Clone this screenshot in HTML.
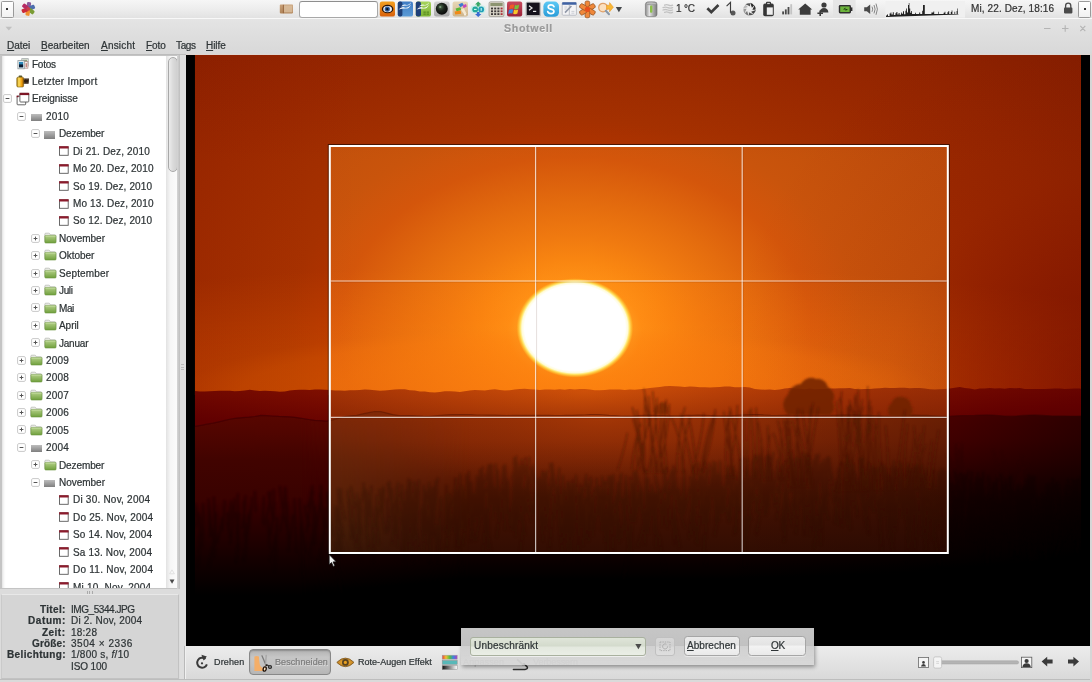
<!DOCTYPE html>
<html><head><meta charset="utf-8"><title>Shotwell</title>
<style>
html,body{margin:0;padding:0}
body{width:1092px;height:682px;overflow:hidden;position:relative;background:#dcdcdc;
 font-family:"Liberation Sans",sans-serif;font-size:10px;color:#2e3436}
.a,.t,svg.i{position:absolute}
.t{white-space:pre;will-change:transform;-webkit-text-stroke:0.22px currentColor}
u{text-decoration:underline;text-underline-offset:1px;text-decoration-thickness:1px}
</style></head><body>

<div class="a" style="left:0;top:0;width:1092px;height:18px;background:linear-gradient(#f6f6f6,#ececec 55%,#e2e2e2)"></div>
<div class="a" style="left:0;top:18px;width:1092px;height:1px;background:#f8f8f8"></div>
<div class="a" style="left:0;top:19px;width:1092px;height:36px;background:linear-gradient(#e4e4e4,#dedede 45%,#d8d8d8)"></div>
<div class="a" style="left:0;top:54px;width:186px;height:1px;background:#bcbcbc"></div>
<div class="a" style="left:186px;top:54px;width:906px;height:1px;background:#dfd6d2"></div>
<div class="a" style="left:1px;top:1px;width:11px;height:15px;border:1px solid #9a9a9a;border-radius:1.5px;background:linear-gradient(#ffffff,#f2f2f2)"></div>
<div class="a" style="left:1078px;top:1px;width:11px;height:15px;border:1px solid #9a9a9a;border-radius:1.5px;background:linear-gradient(#ffffff,#f2f2f2)"></div>
<div class="a" style="left:6px;top:8px;width:2px;height:2px;background:#333"></div>
<div class="a" style="left:1084px;top:8px;width:2px;height:2px;background:#333"></div>
<svg class="i" style="left:0;top:0" width="1092" height="19" viewBox="0 0 1092 19">
<defs>
<linearGradient id="pg1" x1="0" y1="0" x2="0" y2="1"><stop offset="0" stop-color="#f4a020"/><stop offset="1" stop-color="#d8600c"/></linearGradient>
<linearGradient id="pg2" x1="0" y1="0" x2="0" y2="1"><stop offset="0" stop-color="#3f7cc4"/><stop offset="1" stop-color="#5b9bd6"/></linearGradient>
<linearGradient id="pg3" x1="0" y1="0" x2="0" y2="1"><stop offset="0" stop-color="#a6d45c"/><stop offset="1" stop-color="#7cb234"/></linearGradient>
<linearGradient id="pg4" x1="0" y1="0" x2="0" y2="1"><stop offset="0" stop-color="#d4d4d4"/><stop offset="1" stop-color="#a8a8a8"/></linearGradient>
<radialGradient id="pg5" cx="0.4" cy="0.35" r="0.7"><stop offset="0" stop-color="#4c6a4a"/><stop offset="0.45" stop-color="#1c241c"/><stop offset="1" stop-color="#050505"/></radialGradient>
<linearGradient id="pg6" x1="0" y1="0" x2="0" y2="1"><stop offset="0" stop-color="#e8d8b8"/><stop offset="1" stop-color="#cdb48a"/></linearGradient>
<linearGradient id="pg7" x1="0" y1="0" x2="0" y2="1"><stop offset="0" stop-color="#c84a5c"/><stop offset="1" stop-color="#9c2238"/></linearGradient>
<linearGradient id="pg8" x1="0" y1="0" x2="0" y2="1"><stop offset="0" stop-color="#5cc8f4"/><stop offset="1" stop-color="#2a9cd8"/></linearGradient>
<linearGradient id="pg9" x1="0" y1="0" x2="1" y2="0"><stop offset="0" stop-color="#8a8a8a"/><stop offset="0.35" stop-color="#e4e4e4"/><stop offset="0.7" stop-color="#a8a8a8"/><stop offset="1" stop-color="#7c7c7c"/></linearGradient>
<linearGradient id="pg10" x1="0" y1="0" x2="0" y2="1"><stop offset="0" stop-color="#c8a078"/><stop offset="1" stop-color="#b08458"/></linearGradient>
</defs>

<!-- shotwell pinwheel -->
<g transform="translate(28.3 8.9)">
<defs><g id="pw"><rect x="-2.05" y="-6.9" width="4.1" height="6.3" rx="1.1"/></g></defs>
<use href="#pw" fill="#8a5a9a" transform="rotate(8)"/>
<use href="#pw" fill="#4d6eae" transform="rotate(68)"/>
<use href="#pw" fill="#7a9c34" transform="rotate(128)"/>
<use href="#pw" fill="#f0902e" transform="rotate(188)"/>
<use href="#pw" fill="#cc2a3a" transform="rotate(248)"/>
<use href="#pw" fill="#b62a62" transform="rotate(308)"/>
<circle r="1.9" fill="#c8404a"/>
</g>

<!-- brown drawer/ruler icon -->
<rect x="279.8" y="4.6" width="13.2" height="8.8" rx="0.8" fill="url(#pg10)"/>
<rect x="283.8" y="5.4" width="8.6" height="7" fill="#dcc0a0" opacity="0.8"/>
<path d="M283.4 4.8v8.4" stroke="#8e5c34" stroke-width="0.8"/>

<!-- gthumb: orange tile with eye -->
<rect x="379.8" y="1.6" width="15.2" height="15" rx="2.2" fill="url(#pg1)"/>
<ellipse cx="387.6" cy="9" rx="5.8" ry="4.3" fill="#2a1408"/>
<ellipse cx="387.6" cy="9.1" rx="4.4" ry="3.2" fill="#e8eef4"/>
<circle cx="387.3" cy="9.1" r="2.6" fill="#2c5a9a"/>
<circle cx="387.3" cy="9.1" r="1.2" fill="#0a1020"/>

<!-- OOo writer -->
<rect x="397.8" y="1.6" width="15.2" height="15" rx="2.2" fill="url(#pg2)"/>
<rect x="397.8" y="1.6" width="4.6" height="15" rx="2" fill="#1e3f78"/>
<path d="M398.6 9.6q3-3.6 6-2.2t6.4-3q-1.6 4.2-5.2 4.2t-7.2 1zM401 6.4q2.6-2.8 5-1.7t5.2-2.4q-1.300000000000001 3.3-4.2 3.3t-6 0.8z" fill="#fff" opacity="0.9"/>

<!-- OOo calc -->
<rect x="415.8" y="1.6" width="15.2" height="15" rx="2.2" fill="url(#pg3)"/>
<rect x="415.8" y="1.6" width="5.2" height="15" rx="2" fill="#1e3f78"/>
<path d="M416.6 9.6q3-3.6 6-2.2t6.4-3q-1.6 4.2-5.2 4.2t-7.2 1zM419 6.4q2.6-2.8 5-1.7t5.2-2.4q-1.300000000000001 3.3-4.2 3.3t-6 0.8z" fill="#fff" opacity="0.9"/>
<path d="M423.4 11.4h2.4v1.3h-2.4zM426.6 11.4h2.4v1.3h-2.4zM423.4 13.5h2.4v1.3h-2.4zM426.6 13.5h2.4v1.3h-2.4z" fill="#5a8c20"/>

<!-- dark lens -->
<rect x="434" y="1.6" width="15.6" height="15" rx="2.4" fill="url(#pg4)"/>
<circle cx="441.8" cy="8.8" r="6" fill="url(#pg5)"/>
<circle cx="440.2" cy="7" r="1.1" fill="#9ab89a" opacity="0.7"/>

<!-- paint -->
<rect x="452.6" y="1.6" width="15.4" height="15" rx="2" fill="url(#pg6)"/>
<path d="M458.5 4.4l3.8-1.6 1.6 2.4-3.6 2z" fill="#3a7cd0"/>
<path d="M462.6 5.6l3.4-1.6 0.8 2.6-3.2 1.6z" fill="#c848b8"/>
<path d="M455.6 8.6l4.6-1.4 1.4 2.8-5 1.2z" fill="#58b838"/>
<path d="M454.6 11.6l6-1 0.6 3.2-6 0.6z" fill="#f08a18"/>
<path d="M460.8 9.6l3-1.4 2.8 5.6-2.2 1z" fill="#f4e8d0"/>
<path d="M464.6 13.6l2 1.6-2.4 0.4z" fill="#fff"/>

<!-- teal arrows -->
<g>
<rect x="470.6" y="5.6" width="15" height="7.6" rx="3.4" fill="#bfeee8" opacity="0.85"/>
<path d="M478.2 1.4l3.2 3h-1.8v2h-2.8v-2h-1.8z" fill="#38a868"/>
<path d="M478.2 17l-3.2-3h1.8v-2h2.8v2h1.8z" fill="#3a6cd0"/>
<circle cx="475.2" cy="9.4" r="2.9" fill="#24a89c"/>
<circle cx="481.2" cy="9.4" r="2.9" fill="#24a0b8"/>
<path d="M474 9.4h2.6M481.2 8v2.8" stroke="#d8fff8" stroke-width="1"/>
</g>

<!-- calculator -->
<rect x="489" y="1.8" width="15" height="14.8" rx="1.6" fill="#d8d4c8" stroke="#8a867c" stroke-width="0.6"/>
<rect x="490.4" y="3" width="12.2" height="3" fill="#8c9470"/>
<g fill="#3c3838"><rect x="491" y="7.6" width="2" height="1.8"/><rect x="494.2" y="7.6" width="2" height="1.8"/><rect x="497.4" y="7.6" width="2" height="1.8"/>
<rect x="491" y="10.4" width="2" height="1.8"/><rect x="494.2" y="10.4" width="2" height="1.8"/><rect x="497.4" y="10.4" width="2" height="1.8"/>
<rect x="491" y="13.2" width="2" height="1.8"/><rect x="494.2" y="13.2" width="2" height="1.8"/><rect x="497.4" y="13.2" width="2" height="1.8"/></g>
<g fill="#a83038"><rect x="500.6" y="7.6" width="2" height="1.8"/><rect x="500.6" y="10.4" width="2" height="1.8"/><rect x="500.6" y="13.2" width="2" height="1.8"/></g>

<!-- windows flag on red -->
<rect x="507" y="1.6" width="15.2" height="15" rx="2" fill="url(#pg7)"/>
<path d="M510 5.2q2-1.4 4.2-0.4l-0.8 4q-2.2-1-4.2 0.4z" fill="#f05a28"/>
<path d="M515 5q2.2 1 4.2-0.4l-0.8 4q-2 1.4-4.2 0.4z" fill="#7cc038"/>
<path d="M509 10q2-1.4 4.2-0.4l-0.8 4q-2.2-1-4.2 0.4z" fill="#3a8ae0"/>
<path d="M514 9.800000000000001q2.2 1 4.2-0.4l-0.8 4q-2 1.4-4.2 0.4z" fill="#f8c828"/>

<!-- terminal -->
<rect x="525.6" y="1.8" width="15.2" height="14.8" rx="1.6" fill="#b4b4b4"/>
<rect x="526.8" y="2.8" width="12.8" height="12.2" rx="0.6" fill="#15121c"/>
<path d="M529 5.8l3 2.2-3 2.2" fill="none" stroke="#e8e8e8" stroke-width="1.2"/>
<path d="M533 11.400000000000002h3.2" stroke="#e8e8e8" stroke-width="1.2"/>

<!-- skype -->
<rect x="543.4" y="1.6" width="15.6" height="15.2" rx="4.6" fill="url(#pg8)"/>
<path d="M554 6.6q-0.8-1.8-3-1.8q-2.8 0-2.8 2.2q0 1.600000000000001 2.8 2.2t2.900000000000001 2.2q0 2.2-3 2.2q-2.600000000000001 0-3.2-2" fill="none" stroke="#fff" stroke-width="1.7" stroke-linecap="round"/>

<!-- calendar / document -->
<rect x="562.2" y="2.6" width="14.2" height="12.6" rx="0.8" fill="#f4f4f6" stroke="#a8acb4" stroke-width="0.7"/>
<rect x="562.2" y="2.2" width="14.2" height="2.6" rx="0.6" fill="#3e62a4"/>
<path d="M569.3 4.8v10.2" stroke="#b4b8c0" stroke-width="0.9"/>
<path d="M565 12.6l6.4-6.600000000000001" stroke="#9098a8" stroke-width="1.6"/>
<path d="M564.4 7h2.8M564.4 9h2.2M571.4 11.4h3M571.4 13.2h3" stroke="#c0c4cc" stroke-width="0.8"/>

<!-- orange flower -->
<g transform="translate(587.4 9.4)">
<g id="pt"><rect x="-2.3" y="-8.4" width="4.6" height="7.6" rx="1.6" fill="#f0883a" stroke="#9a5a2a" stroke-width="0.8"/></g>
<use href="#pt" transform="rotate(60)"/><use href="#pt" transform="rotate(120)"/><use href="#pt" transform="rotate(180)"/><use href="#pt" transform="rotate(240)"/><use href="#pt" transform="rotate(300)"/>
<circle r="2.6" fill="#e8501c"/>
</g>

<!-- orange magnifier + arrow -->
<circle cx="603" cy="7.6" r="4.3" fill="#fbe0c0" stroke="#e0a068" stroke-width="1.3"/>
<path d="M605.8 10.8l3.2 3.4" stroke="#8a98a8" stroke-width="2" stroke-linecap="round"/>
<path d="M606.6 5.2h3v-2.6l3.8 4.6-3.8 4.6v-2.6h-3z" fill="#f8b838" stroke="#e89018" stroke-width="0.5"/>

<!-- small drop-down triangle -->
<path d="M615.8 7h6.2l-3.1 5.2z" fill="#44484c"/>

<!-- trash can -->
<rect x="645.4" y="2" width="11.6" height="14.6" rx="2.4" fill="url(#pg9)" stroke="#6e6e6e" stroke-width="0.6"/>
<ellipse cx="651.2" cy="3.4" rx="5.2" ry="1.5" fill="#bcbcbc" stroke="#7a7a7a" stroke-width="0.5"/>
<rect x="650" y="5.4" width="2.4" height="7.4" rx="1" fill="#8cc048"/>

<!-- fog -->
<g stroke="#c2c2c2" stroke-width="1.3" fill="none" stroke-linecap="round">
<path d="M664.6 5.2q2-1 4 0t4 0"/><path d="M663 7.6q2.4-1 4.8 0t4.800000000000001 0"/><path d="M663 10q2.4-1 4.8 0t4.800000000000001 0"/><path d="M664.6 12.4q2-1 4 0t4 0"/>
</g>

<!-- check mark -->
<path d="M706.4 9.3l1.9-2 3 3 6.2-6.2 1.9 1.9-8.1 8.1z" fill="#3e3e3e"/>
<!-- hook -->
<path d="M726.6 6.2l3.9-3.8v10.4" fill="none" stroke="#3c3c3c" stroke-width="1.15"/>
<circle cx="733" cy="12.9" r="2.5" fill="#585858"/>
<path d="M730.4 12.8h1" stroke="#3c3c3c" stroke-width="1.1"/>
<!-- spinner -->
<g transform="translate(749.5 9.3)">
<defs><path id="bl" d="M-0.45 -6.48Q2.26 -6.20 3.86 -4.60L2.09 -2.01Q1.35 -3.34 -0.45 -6.48z"/></defs>
<use href="#bl" fill="#2c2c2c" transform="rotate(10)"/>
<use href="#bl" fill="#333" transform="rotate(55)"/>
<use href="#bl" fill="#444" transform="rotate(100)"/>
<use href="#bl" fill="#555" transform="rotate(145)"/>
<use href="#bl" fill="#777" transform="rotate(190)"/>
<use href="#bl" fill="#9a9a9a" transform="rotate(235)"/>
<use href="#bl" fill="#b8b8b8" transform="rotate(280)"/>
<use href="#bl" fill="#555" transform="rotate(325)"/>
</g>
<!-- clipboard -->
<rect x="763.2" y="3.6" width="10.6" height="12.6" rx="1.8" fill="#363636"/>
<rect x="766" y="1.8" width="5" height="3.4" rx="1" fill="#363636"/>
<rect x="767.2" y="2.9" width="2.6" height="1.2" fill="#d0d0d0"/>
<rect x="766.8" y="7.4" width="6" height="7.4" fill="#eeeeee"/>
<!-- signal bars -->
<rect x="782.2" y="11.4" width="1.8" height="3" fill="#4a4a4a"/>
<rect x="784.9" y="9.4" width="1.8" height="5" fill="#4a4a4a"/>
<rect x="787.6" y="7" width="1.8" height="7.4" fill="#4a4a4a"/>
<rect x="790.3" y="4.2" width="1.8" height="10.2" fill="#c4c4c4"/>
<!-- home -->
<path d="M805.2 3.6l7 6h-1.600000000000001v5.2h-10.8v-5.2h-1.6z" fill="#3c3c3c"/>
<!-- person plus -->
<circle cx="824" cy="5" r="2.6" fill="#3c3c3c"/>
<path d="M819.6 12.6q0.4-4.6 4.4-4.6t4.4 4.6z" fill="#3c3c3c"/>
<path d="M820.2 10.4v5.6M817.4 13.2h5.6" stroke="#3c3c3c" stroke-width="1.6"/>
<!-- battery applet (pressed background) -->
<rect x="833" y="0" width="22.6" height="18" fill="#e2e2e2" opacity="0.8"/>
<rect x="838.8" y="5" width="12.2" height="8.4" rx="1.4" fill="#2e2e2e"/>
<rect x="851" y="7.4" width="1.4" height="3.6" fill="#2e2e2e"/>
<rect x="840.2" y="6.4" width="9.4" height="5.6" fill="#6cb43c"/>
<path d="M843 9.6l2.4-2v1.4h2.600000000000001l-2.4 2v-1.4z" fill="#1e3c10"/>
<!-- speaker -->
<path d="M864.2 7.2h2.6l3.4-2.8v9.6l-3.4-2.8h-2.6z" fill="#4a4a4a"/>
<path d="M872 6.6q1.4 2.6 0 5.2M874 5q2.2 4.2 0 8.4M876 3.6q2.8 5.6 0 11.2" fill="none" stroke="#7a7a7a" stroke-width="0.9"/>
<!-- cpu graph -->
<rect x="885.4" y="1" width="79.6" height="16.6" fill="#f0f0f0"/>
<path d="M886 17v-1.400000000000002h1v-1h1v1.4h1.6v-2.4h1v-1h0.8v2h1.400000000000001v-2.4h1v2.8h1.6v-1.8h1v-1.200000000000001h1v2.4h1.2v-1.4h1v1.8h1.4v-2.4h0.8v1.400000000000001h1.2v-2.6h1v3h1.4v-3.4h0.8v-2.2h0.8v3.8h1v-7.4h0.8v-2h0.6v5.4h0.8v4.4h1v-1.8h0.8v3h3v-1.2h0.8v1.200000000000001h3.4v-1.600000000000002h1v1.6h2v-3.2h0.8v-5.8h1.8v9h3v0h3.6v-1.6h2v-1h0.8v2.6h4v-2.2h0.6v2.2h4.8v-1.2h1v-1h0.8v2.2h2v-1.8h1v-1.2h0.8v3h1.6v-2h0.8v-1.4h0.8v3.400000000000002h2v-2.200000000000001h0.8v2.2h1.4v-3h0.6v-2.400000000000001h0.6v5.4h0.6v0.6z" fill="#222"/>
<!-- lock -->
<path d="M1065.6 8v-2.2a2.6 2.6 0 0 1 5.2 0v2.2" fill="none" stroke="#4a4a4a" stroke-width="1.3"/>
<rect x="1064" y="7.6" width="8.4" height="5.8" rx="0.8" fill="#4a4a4a"/>
</svg>

<div class="a" style="left:299px;top:1px;width:77px;height:15px;border:1px solid #a8a8a8;border-top-color:#8e8e8e;border-radius:3px;background:#fff"></div>
<div class="t" style="top:3.23px;font-size:10px;line-height:12px;color:#333;left:676.40px;letter-spacing:-0.217px;">1 °C</div>
<div class="t" style="top:3.04px;font-size:10px;line-height:12px;color:#333;left:971.30px;letter-spacing:0.109px;">Mi, 22. Dez, 18:16</div>
<div class="t" style="top:22.43px;font-size:10.6px;line-height:12px;color:#9a9a9a;left:504.00px;letter-spacing:0.676px;font-weight:bold;text-shadow:0 1px 0 #f4f4f4;">Shotwell</div>
<svg class="i" style="left:5px;top:26px" width="8" height="6" viewBox="0 0 8 6"><path d="M0.5 0.8h6.6L3.8 4.6z" fill="#c0c0c0"/></svg>
<svg class="i" style="left:1040px;top:22px" width="50" height="14" viewBox="1040 22 50 14" fill="none" stroke="#b4b4b4" stroke-width="1.1"><path d="M1044 28.5h6.5M1062 28.5h6.5M1065.2 25.2v6.6M1080.3 25.8l5 5.4M1085.3 25.8l-5 5.4"/></svg>
<div class="t" style="top:39.53px;font-size:10px;line-height:12px;color:#2e3436;left:7.00px;letter-spacing:-0.038px;"><u>D</u>atei</div>
<div class="t" style="top:39.53px;font-size:10px;line-height:12px;color:#2e3436;left:41.20px;letter-spacing:0.028px;"><u>B</u>earbeiten</div>
<div class="t" style="top:39.53px;font-size:10px;line-height:12px;color:#2e3436;left:100.70px;letter-spacing:0.200px;"><u>A</u>nsicht</div>
<div class="t" style="top:39.53px;font-size:10px;line-height:12px;color:#2e3436;left:145.50px;letter-spacing:-0.100px;"><u>F</u>oto</div>
<div class="t" style="top:39.53px;font-size:10px;line-height:12px;color:#2e3436;left:176.00px;letter-spacing:-0.367px;">Tags</div>
<div class="t" style="top:39.53px;font-size:10px;line-height:12px;color:#2e3436;left:206.30px;letter-spacing:-0.075px;"><u>H</u>ilfe</div>
<div class="a" style="left:0;top:55px;width:180px;height:534px;background:#c4c4c4"></div>
<div class="a" style="left:1.5px;top:55.5px;width:164px;height:532.3px;background:#fff;box-shadow:inset 3px 0 3px -2px #dcdcdc"></div>
<div class="a" style="left:165.5px;top:55.5px;width:11.6px;height:532.3px;background:linear-gradient(90deg,#e2e2e2,#f6f6f6 40%,#fbfbfb)"></div>
<div class="a" style="left:167.5px;top:57px;width:8px;height:112.5px;border:0.8px solid #a9a9a9;border-radius:5px;background:linear-gradient(90deg,#ececec,#dadada 50%,#d0d0d0)"></div>
<svg class="i" style="left:168px;top:568px" width="9" height="18" viewBox="168 568 9 18"><path d="M172 569.8l2.4 4h-4.8z" fill="none" stroke="#d8d8d8" stroke-width="0.7"/><path d="M169.6 579.4h4.9l-2.45 4.4z" fill="#4a4a4a"/></svg>
<div class="a" style="left:177.2px;top:55px;width:2.6px;height:534px;background:linear-gradient(90deg,#d6d6d6,#bdbdbd)"></div>
<div class="a" style="left:179.8px;top:55px;width:6.4px;height:627px;background:#dedede"></div>
<div class="a" style="left:180.6px;top:364px;width:3px;height:7px;background:repeating-linear-gradient(#bababa 0 1px,transparent 1px 2.6px)"></div>
<div class="a" style="left:0;top:55.5px;width:165.5px;height:532.3px;overflow:hidden"><div class="a" style="left:0;top:-55.5px;width:200px;height:700px">
<svg class="i" style="left:16.5px;top:57.5px" width="12" height="12" viewBox="0 0 12 12"><rect x="4.8" y="0.7" width="6.4" height="7.4" fill="#e8ece4" stroke="#9aa0a0" stroke-width="0.8"/><rect x="6" y="1.8" width="4" height="4.6" fill="#8aa078"/><rect x="6.9" y="3.6" width="4" height="6.6" fill="#f4f0ee" stroke="#b08a84" stroke-width="0.7"/><path d="M9.2 5.2v4" stroke="#b0483a" stroke-width="0.9"/><rect x="0.9" y="2.6" width="6.3" height="8.2" fill="#eef2f4" stroke="#8e989c" stroke-width="0.8"/><rect x="2" y="3.9" width="4.1" height="5.4" fill="#2a86b8"/><rect x="2" y="6.4" width="4.1" height="2.9" fill="#0a1a30"/></svg>
<div class="t" style="top:58.53px;font-size:10px;line-height:12px;color:#2e3436;left:32.30px;letter-spacing:-0.250px;">Fotos</div>
<svg class="i" style="left:16px;top:74.5px" width="14" height="13" viewBox="0 0 14 13"><defs><linearGradient id="fr" x1="0" y1="0" x2="1" y2="0"><stop offset="0" stop-color="#a87a08"/><stop offset="0.3" stop-color="#ffe060"/><stop offset="0.7" stop-color="#f0a010"/><stop offset="1" stop-color="#9a5c04"/></linearGradient></defs><rect x="2.6" y="0.4" width="3.6" height="2.4" rx="0.8" fill="#5a5a30"/><path d="M7.2 3.4h5.8l-0.4 5.3h-5.4z" fill="#2a1c12"/><path d="M8 4.6h4.6M8 7.9h4.6" stroke="#8a7460" stroke-width="0.7" stroke-dasharray="0.9 0.8"/><rect x="0.8" y="2.2" width="6.8" height="9.8" rx="1.2" fill="url(#fr)" stroke="#7a5a08" stroke-width="0.6"/></svg>
<div class="t" style="top:75.97px;font-size:10px;line-height:12px;color:#2e3436;left:32.30px;letter-spacing:0.269px;">Letzter Import</div>
<svg class="i" style="left:3.30px;top:94.17px" width="9" height="9" viewBox="0 0 9 9"><rect x="0.6" y="0.6" width="7.8" height="7.8" rx="1.3" fill="#fff" stroke="#c9c9c9" stroke-width="1"/><path d="M2.6 4.5h3.8" stroke="#555" stroke-width="1" fill="none"/></svg>
<svg class="i" style="left:16px;top:91.5px" width="14" height="14" viewBox="0 0 14 14"><rect x="1.1" y="4.2" width="8.6" height="8.6" rx="0.8" fill="#fff" stroke="#555" stroke-width="0.9"/><rect x="3.9" y="1.4" width="8.9" height="8.6" rx="0.8" fill="#fff" stroke="#555" stroke-width="0.9"/><rect x="3.5" y="0.8" width="9.7" height="2.3" fill="#7d1525"/><rect x="0.6" y="3.6" width="2" height="1.6" fill="#7d1525"/></svg>
<div class="t" style="top:93.41px;font-size:10px;line-height:12px;color:#2e3436;left:32.30px;letter-spacing:-0.111px;">Ereignisse</div>
<svg class="i" style="left:17.10px;top:111.60px" width="9" height="9" viewBox="0 0 9 9"><rect x="0.6" y="0.6" width="7.8" height="7.8" rx="1.3" fill="#fff" stroke="#c9c9c9" stroke-width="1"/><path d="M2.6 4.5h3.8" stroke="#555" stroke-width="1" fill="none"/></svg>
<div class="a" style="left:30.80px;top:114.00px;width:11px;height:7.2px;background:linear-gradient(#bdbdbd,#7f7f7f)"></div>
<div class="t" style="top:110.84px;font-size:10px;line-height:12px;color:#2e3436;left:46.20px;letter-spacing:0.183px;">2010</div>
<svg class="i" style="left:30.70px;top:129.04px" width="9" height="9" viewBox="0 0 9 9"><rect x="0.6" y="0.6" width="7.8" height="7.8" rx="1.3" fill="#fff" stroke="#c9c9c9" stroke-width="1"/><path d="M2.6 4.5h3.8" stroke="#555" stroke-width="1" fill="none"/></svg>
<div class="a" style="left:44.40px;top:131.44px;width:11px;height:7.2px;background:linear-gradient(#bdbdbd,#7f7f7f)"></div>
<div class="t" style="top:128.28px;font-size:10px;line-height:12px;color:#2e3436;left:59.40px;letter-spacing:-0.107px;">Dezember</div>
<svg class="i" style="left:58.90px;top:146.28px" width="10" height="10" viewBox="0 0 10 10"><rect x="0.5" y="0.9" width="8.7" height="8.4" fill="#fff" stroke="#5a5a5a" stroke-width="0.9"/><rect x="0.1" y="0.2" width="9.5" height="2.3" fill="#8c1b2c"/></svg>
<div class="t" style="top:145.71px;font-size:10px;line-height:12px;color:#2e3436;left:72.90px;letter-spacing:0.147px;">Di 21. Dez, 2010</div>
<svg class="i" style="left:58.90px;top:163.71px" width="10" height="10" viewBox="0 0 10 10"><rect x="0.5" y="0.9" width="8.7" height="8.4" fill="#fff" stroke="#5a5a5a" stroke-width="0.9"/><rect x="0.1" y="0.2" width="9.5" height="2.3" fill="#8c1b2c"/></svg>
<div class="t" style="top:163.14px;font-size:10px;line-height:12px;color:#2e3436;left:72.90px;letter-spacing:0.103px;">Mo 20. Dez, 2010</div>
<svg class="i" style="left:58.90px;top:181.14px" width="10" height="10" viewBox="0 0 10 10"><rect x="0.5" y="0.9" width="8.7" height="8.4" fill="#fff" stroke="#5a5a5a" stroke-width="0.9"/><rect x="0.1" y="0.2" width="9.5" height="2.3" fill="#8c1b2c"/></svg>
<div class="t" style="top:180.58px;font-size:10px;line-height:12px;color:#2e3436;left:72.90px;letter-spacing:0.113px;">So 19. Dez, 2010</div>
<svg class="i" style="left:58.90px;top:198.58px" width="10" height="10" viewBox="0 0 10 10"><rect x="0.5" y="0.9" width="8.7" height="8.4" fill="#fff" stroke="#5a5a5a" stroke-width="0.9"/><rect x="0.1" y="0.2" width="9.5" height="2.3" fill="#8c1b2c"/></svg>
<div class="t" style="top:198.01px;font-size:10px;line-height:12px;color:#2e3436;left:72.90px;letter-spacing:0.103px;">Mo 13. Dez, 2010</div>
<svg class="i" style="left:58.90px;top:216.01px" width="10" height="10" viewBox="0 0 10 10"><rect x="0.5" y="0.9" width="8.7" height="8.4" fill="#fff" stroke="#5a5a5a" stroke-width="0.9"/><rect x="0.1" y="0.2" width="9.5" height="2.3" fill="#8c1b2c"/></svg>
<div class="t" style="top:215.45px;font-size:10px;line-height:12px;color:#2e3436;left:72.90px;letter-spacing:0.113px;">So 12. Dez, 2010</div>
<svg class="i" style="left:30.70px;top:233.65px" width="9" height="9" viewBox="0 0 9 9"><rect x="0.6" y="0.6" width="7.8" height="7.8" rx="1.3" fill="#fff" stroke="#c9c9c9" stroke-width="1"/><path d="M2.6 4.5h3.8M4.5 2.6v3.8" stroke="#555" stroke-width="1" fill="none"/></svg>
<svg class="i" style="left:43.50px;top:231.95px" width="13" height="12" viewBox="0 0 13 12"><defs><linearGradient id="fg10" x1="0" y1="0" x2="0" y2="1"><stop offset="0" stop-color="#b4d088"/><stop offset="1" stop-color="#6f9f3c"/></linearGradient></defs><path d="M0.8 2.2q0-1 1-1h3q0.8 0 1.2 0.9l0.3 0.7h4.6q0.9 0 0.9 0.9v6h-11z" fill="#eeeeec" stroke="#b2b5ae" stroke-width="0.7"/><rect x="0.9" y="3.4" width="11.1" height="7.6" rx="0.8" fill="url(#fg10)" stroke="#6a933d" stroke-width="0.6"/><path d="M1.4 4.1h10.1" stroke="#d2e6b4" stroke-width="0.6"/></svg>
<div class="t" style="top:232.88px;font-size:10px;line-height:12px;color:#2e3436;left:59.40px;letter-spacing:-0.021px;">November</div>
<svg class="i" style="left:30.70px;top:251.08px" width="9" height="9" viewBox="0 0 9 9"><rect x="0.6" y="0.6" width="7.8" height="7.8" rx="1.3" fill="#fff" stroke="#c9c9c9" stroke-width="1"/><path d="M2.6 4.5h3.8M4.5 2.6v3.8" stroke="#555" stroke-width="1" fill="none"/></svg>
<svg class="i" style="left:43.50px;top:249.38px" width="13" height="12" viewBox="0 0 13 12"><defs><linearGradient id="fg11" x1="0" y1="0" x2="0" y2="1"><stop offset="0" stop-color="#b4d088"/><stop offset="1" stop-color="#6f9f3c"/></linearGradient></defs><path d="M0.8 2.2q0-1 1-1h3q0.8 0 1.2 0.9l0.3 0.7h4.6q0.9 0 0.9 0.9v6h-11z" fill="#eeeeec" stroke="#b2b5ae" stroke-width="0.7"/><rect x="0.9" y="3.4" width="11.1" height="7.6" rx="0.8" fill="url(#fg11)" stroke="#6a933d" stroke-width="0.6"/><path d="M1.4 4.1h10.1" stroke="#d2e6b4" stroke-width="0.6"/></svg>
<div class="t" style="top:250.32px;font-size:10px;line-height:12px;color:#2e3436;left:59.40px;letter-spacing:-0.042px;">Oktober</div>
<svg class="i" style="left:30.70px;top:268.52px" width="9" height="9" viewBox="0 0 9 9"><rect x="0.6" y="0.6" width="7.8" height="7.8" rx="1.3" fill="#fff" stroke="#c9c9c9" stroke-width="1"/><path d="M2.6 4.5h3.8M4.5 2.6v3.8" stroke="#555" stroke-width="1" fill="none"/></svg>
<svg class="i" style="left:43.50px;top:266.82px" width="13" height="12" viewBox="0 0 13 12"><defs><linearGradient id="fg12" x1="0" y1="0" x2="0" y2="1"><stop offset="0" stop-color="#b4d088"/><stop offset="1" stop-color="#6f9f3c"/></linearGradient></defs><path d="M0.8 2.2q0-1 1-1h3q0.8 0 1.2 0.9l0.3 0.7h4.6q0.9 0 0.9 0.9v6h-11z" fill="#eeeeec" stroke="#b2b5ae" stroke-width="0.7"/><rect x="0.9" y="3.4" width="11.1" height="7.6" rx="0.8" fill="url(#fg12)" stroke="#6a933d" stroke-width="0.6"/><path d="M1.4 4.1h10.1" stroke="#d2e6b4" stroke-width="0.6"/></svg>
<div class="t" style="top:267.75px;font-size:10px;line-height:12px;color:#2e3436;left:59.40px;letter-spacing:0.137px;">September</div>
<svg class="i" style="left:30.70px;top:285.95px" width="9" height="9" viewBox="0 0 9 9"><rect x="0.6" y="0.6" width="7.8" height="7.8" rx="1.3" fill="#fff" stroke="#c9c9c9" stroke-width="1"/><path d="M2.6 4.5h3.8M4.5 2.6v3.8" stroke="#555" stroke-width="1" fill="none"/></svg>
<svg class="i" style="left:43.50px;top:284.25px" width="13" height="12" viewBox="0 0 13 12"><defs><linearGradient id="fg13" x1="0" y1="0" x2="0" y2="1"><stop offset="0" stop-color="#b4d088"/><stop offset="1" stop-color="#6f9f3c"/></linearGradient></defs><path d="M0.8 2.2q0-1 1-1h3q0.8 0 1.2 0.9l0.3 0.7h4.6q0.9 0 0.9 0.9v6h-11z" fill="#eeeeec" stroke="#b2b5ae" stroke-width="0.7"/><rect x="0.9" y="3.4" width="11.1" height="7.6" rx="0.8" fill="url(#fg13)" stroke="#6a933d" stroke-width="0.6"/><path d="M1.4 4.1h10.1" stroke="#d2e6b4" stroke-width="0.6"/></svg>
<div class="t" style="top:285.19px;font-size:10px;line-height:12px;color:#2e3436;left:59.40px;letter-spacing:-0.367px;">Juli</div>
<svg class="i" style="left:30.70px;top:303.39px" width="9" height="9" viewBox="0 0 9 9"><rect x="0.6" y="0.6" width="7.8" height="7.8" rx="1.3" fill="#fff" stroke="#c9c9c9" stroke-width="1"/><path d="M2.6 4.5h3.8M4.5 2.6v3.8" stroke="#555" stroke-width="1" fill="none"/></svg>
<svg class="i" style="left:43.50px;top:301.69px" width="13" height="12" viewBox="0 0 13 12"><defs><linearGradient id="fg14" x1="0" y1="0" x2="0" y2="1"><stop offset="0" stop-color="#b4d088"/><stop offset="1" stop-color="#6f9f3c"/></linearGradient></defs><path d="M0.8 2.2q0-1 1-1h3q0.8 0 1.2 0.9l0.3 0.7h4.6q0.9 0 0.9 0.9v6h-11z" fill="#eeeeec" stroke="#b2b5ae" stroke-width="0.7"/><rect x="0.9" y="3.4" width="11.1" height="7.6" rx="0.8" fill="url(#fg14)" stroke="#6a933d" stroke-width="0.6"/><path d="M1.4 4.1h10.1" stroke="#d2e6b4" stroke-width="0.6"/></svg>
<div class="t" style="top:302.62px;font-size:10px;line-height:12px;color:#2e3436;left:59.40px;letter-spacing:-0.450px;">Mai</div>
<svg class="i" style="left:30.70px;top:320.82px" width="9" height="9" viewBox="0 0 9 9"><rect x="0.6" y="0.6" width="7.8" height="7.8" rx="1.3" fill="#fff" stroke="#c9c9c9" stroke-width="1"/><path d="M2.6 4.5h3.8M4.5 2.6v3.8" stroke="#555" stroke-width="1" fill="none"/></svg>
<svg class="i" style="left:43.50px;top:319.12px" width="13" height="12" viewBox="0 0 13 12"><defs><linearGradient id="fg15" x1="0" y1="0" x2="0" y2="1"><stop offset="0" stop-color="#b4d088"/><stop offset="1" stop-color="#6f9f3c"/></linearGradient></defs><path d="M0.8 2.2q0-1 1-1h3q0.8 0 1.2 0.9l0.3 0.7h4.6q0.9 0 0.9 0.9v6h-11z" fill="#eeeeec" stroke="#b2b5ae" stroke-width="0.7"/><rect x="0.9" y="3.4" width="11.1" height="7.6" rx="0.8" fill="url(#fg15)" stroke="#6a933d" stroke-width="0.6"/><path d="M1.4 4.1h10.1" stroke="#d2e6b4" stroke-width="0.6"/></svg>
<div class="t" style="top:320.06px;font-size:10px;line-height:12px;color:#2e3436;left:59.40px;letter-spacing:-0.050px;">April</div>
<svg class="i" style="left:30.70px;top:338.26px" width="9" height="9" viewBox="0 0 9 9"><rect x="0.6" y="0.6" width="7.8" height="7.8" rx="1.3" fill="#fff" stroke="#c9c9c9" stroke-width="1"/><path d="M2.6 4.5h3.8M4.5 2.6v3.8" stroke="#555" stroke-width="1" fill="none"/></svg>
<svg class="i" style="left:43.50px;top:336.56px" width="13" height="12" viewBox="0 0 13 12"><defs><linearGradient id="fg16" x1="0" y1="0" x2="0" y2="1"><stop offset="0" stop-color="#b4d088"/><stop offset="1" stop-color="#6f9f3c"/></linearGradient></defs><path d="M0.8 2.2q0-1 1-1h3q0.8 0 1.2 0.9l0.3 0.7h4.6q0.9 0 0.9 0.9v6h-11z" fill="#eeeeec" stroke="#b2b5ae" stroke-width="0.7"/><rect x="0.9" y="3.4" width="11.1" height="7.6" rx="0.8" fill="url(#fg16)" stroke="#6a933d" stroke-width="0.6"/><path d="M1.4 4.1h10.1" stroke="#d2e6b4" stroke-width="0.6"/></svg>
<div class="t" style="top:337.50px;font-size:10px;line-height:12px;color:#2e3436;left:59.40px;letter-spacing:-0.220px;">Januar</div>
<svg class="i" style="left:17.10px;top:355.69px" width="9" height="9" viewBox="0 0 9 9"><rect x="0.6" y="0.6" width="7.8" height="7.8" rx="1.3" fill="#fff" stroke="#c9c9c9" stroke-width="1"/><path d="M2.6 4.5h3.8M4.5 2.6v3.8" stroke="#555" stroke-width="1" fill="none"/></svg>
<svg class="i" style="left:29.90px;top:354.00px" width="13" height="12" viewBox="0 0 13 12"><defs><linearGradient id="fg17" x1="0" y1="0" x2="0" y2="1"><stop offset="0" stop-color="#b4d088"/><stop offset="1" stop-color="#6f9f3c"/></linearGradient></defs><path d="M0.8 2.2q0-1 1-1h3q0.8 0 1.2 0.9l0.3 0.7h4.6q0.9 0 0.9 0.9v6h-11z" fill="#eeeeec" stroke="#b2b5ae" stroke-width="0.7"/><rect x="0.9" y="3.4" width="11.1" height="7.6" rx="0.8" fill="url(#fg17)" stroke="#6a933d" stroke-width="0.6"/><path d="M1.4 4.1h10.1" stroke="#d2e6b4" stroke-width="0.6"/></svg>
<div class="t" style="top:354.93px;font-size:10px;line-height:12px;color:#2e3436;left:46.20px;letter-spacing:0.183px;">2009</div>
<svg class="i" style="left:17.10px;top:373.13px" width="9" height="9" viewBox="0 0 9 9"><rect x="0.6" y="0.6" width="7.8" height="7.8" rx="1.3" fill="#fff" stroke="#c9c9c9" stroke-width="1"/><path d="M2.6 4.5h3.8M4.5 2.6v3.8" stroke="#555" stroke-width="1" fill="none"/></svg>
<svg class="i" style="left:29.90px;top:371.43px" width="13" height="12" viewBox="0 0 13 12"><defs><linearGradient id="fg18" x1="0" y1="0" x2="0" y2="1"><stop offset="0" stop-color="#b4d088"/><stop offset="1" stop-color="#6f9f3c"/></linearGradient></defs><path d="M0.8 2.2q0-1 1-1h3q0.8 0 1.2 0.9l0.3 0.7h4.6q0.9 0 0.9 0.9v6h-11z" fill="#eeeeec" stroke="#b2b5ae" stroke-width="0.7"/><rect x="0.9" y="3.4" width="11.1" height="7.6" rx="0.8" fill="url(#fg18)" stroke="#6a933d" stroke-width="0.6"/><path d="M1.4 4.1h10.1" stroke="#d2e6b4" stroke-width="0.6"/></svg>
<div class="t" style="top:372.37px;font-size:10px;line-height:12px;color:#2e3436;left:46.20px;letter-spacing:0.183px;">2008</div>
<svg class="i" style="left:17.10px;top:390.56px" width="9" height="9" viewBox="0 0 9 9"><rect x="0.6" y="0.6" width="7.8" height="7.8" rx="1.3" fill="#fff" stroke="#c9c9c9" stroke-width="1"/><path d="M2.6 4.5h3.8M4.5 2.6v3.8" stroke="#555" stroke-width="1" fill="none"/></svg>
<svg class="i" style="left:29.90px;top:388.87px" width="13" height="12" viewBox="0 0 13 12"><defs><linearGradient id="fg19" x1="0" y1="0" x2="0" y2="1"><stop offset="0" stop-color="#b4d088"/><stop offset="1" stop-color="#6f9f3c"/></linearGradient></defs><path d="M0.8 2.2q0-1 1-1h3q0.8 0 1.2 0.9l0.3 0.7h4.6q0.9 0 0.9 0.9v6h-11z" fill="#eeeeec" stroke="#b2b5ae" stroke-width="0.7"/><rect x="0.9" y="3.4" width="11.1" height="7.6" rx="0.8" fill="url(#fg19)" stroke="#6a933d" stroke-width="0.6"/><path d="M1.4 4.1h10.1" stroke="#d2e6b4" stroke-width="0.6"/></svg>
<div class="t" style="top:389.80px;font-size:10px;line-height:12px;color:#2e3436;left:46.20px;letter-spacing:0.183px;">2007</div>
<svg class="i" style="left:17.10px;top:408.00px" width="9" height="9" viewBox="0 0 9 9"><rect x="0.6" y="0.6" width="7.8" height="7.8" rx="1.3" fill="#fff" stroke="#c9c9c9" stroke-width="1"/><path d="M2.6 4.5h3.8M4.5 2.6v3.8" stroke="#555" stroke-width="1" fill="none"/></svg>
<svg class="i" style="left:29.90px;top:406.30px" width="13" height="12" viewBox="0 0 13 12"><defs><linearGradient id="fg20" x1="0" y1="0" x2="0" y2="1"><stop offset="0" stop-color="#b4d088"/><stop offset="1" stop-color="#6f9f3c"/></linearGradient></defs><path d="M0.8 2.2q0-1 1-1h3q0.8 0 1.2 0.9l0.3 0.7h4.6q0.9 0 0.9 0.9v6h-11z" fill="#eeeeec" stroke="#b2b5ae" stroke-width="0.7"/><rect x="0.9" y="3.4" width="11.1" height="7.6" rx="0.8" fill="url(#fg20)" stroke="#6a933d" stroke-width="0.6"/><path d="M1.4 4.1h10.1" stroke="#d2e6b4" stroke-width="0.6"/></svg>
<div class="t" style="top:407.24px;font-size:10px;line-height:12px;color:#2e3436;left:46.20px;letter-spacing:0.183px;">2006</div>
<svg class="i" style="left:17.10px;top:425.44px" width="9" height="9" viewBox="0 0 9 9"><rect x="0.6" y="0.6" width="7.8" height="7.8" rx="1.3" fill="#fff" stroke="#c9c9c9" stroke-width="1"/><path d="M2.6 4.5h3.8M4.5 2.6v3.8" stroke="#555" stroke-width="1" fill="none"/></svg>
<svg class="i" style="left:29.90px;top:423.74px" width="13" height="12" viewBox="0 0 13 12"><defs><linearGradient id="fg21" x1="0" y1="0" x2="0" y2="1"><stop offset="0" stop-color="#b4d088"/><stop offset="1" stop-color="#6f9f3c"/></linearGradient></defs><path d="M0.8 2.2q0-1 1-1h3q0.8 0 1.2 0.9l0.3 0.7h4.6q0.9 0 0.9 0.9v6h-11z" fill="#eeeeec" stroke="#b2b5ae" stroke-width="0.7"/><rect x="0.9" y="3.4" width="11.1" height="7.6" rx="0.8" fill="url(#fg21)" stroke="#6a933d" stroke-width="0.6"/><path d="M1.4 4.1h10.1" stroke="#d2e6b4" stroke-width="0.6"/></svg>
<div class="t" style="top:424.67px;font-size:10px;line-height:12px;color:#2e3436;left:46.20px;letter-spacing:0.183px;">2005</div>
<svg class="i" style="left:17.10px;top:442.87px" width="9" height="9" viewBox="0 0 9 9"><rect x="0.6" y="0.6" width="7.8" height="7.8" rx="1.3" fill="#fff" stroke="#c9c9c9" stroke-width="1"/><path d="M2.6 4.5h3.8" stroke="#555" stroke-width="1" fill="none"/></svg>
<div class="a" style="left:30.80px;top:445.27px;width:11px;height:7.2px;background:linear-gradient(#bdbdbd,#7f7f7f)"></div>
<div class="t" style="top:442.11px;font-size:10px;line-height:12px;color:#2e3436;left:46.20px;letter-spacing:0.183px;">2004</div>
<svg class="i" style="left:30.70px;top:460.31px" width="9" height="9" viewBox="0 0 9 9"><rect x="0.6" y="0.6" width="7.8" height="7.8" rx="1.3" fill="#fff" stroke="#c9c9c9" stroke-width="1"/><path d="M2.6 4.5h3.8M4.5 2.6v3.8" stroke="#555" stroke-width="1" fill="none"/></svg>
<svg class="i" style="left:43.50px;top:458.61px" width="13" height="12" viewBox="0 0 13 12"><defs><linearGradient id="fg23" x1="0" y1="0" x2="0" y2="1"><stop offset="0" stop-color="#b4d088"/><stop offset="1" stop-color="#6f9f3c"/></linearGradient></defs><path d="M0.8 2.2q0-1 1-1h3q0.8 0 1.2 0.9l0.3 0.7h4.6q0.9 0 0.9 0.9v6h-11z" fill="#eeeeec" stroke="#b2b5ae" stroke-width="0.7"/><rect x="0.9" y="3.4" width="11.1" height="7.6" rx="0.8" fill="url(#fg23)" stroke="#6a933d" stroke-width="0.6"/><path d="M1.4 4.1h10.1" stroke="#d2e6b4" stroke-width="0.6"/></svg>
<div class="t" style="top:459.54px;font-size:10px;line-height:12px;color:#2e3436;left:59.40px;letter-spacing:-0.107px;">Dezember</div>
<svg class="i" style="left:30.70px;top:477.74px" width="9" height="9" viewBox="0 0 9 9"><rect x="0.6" y="0.6" width="7.8" height="7.8" rx="1.3" fill="#fff" stroke="#c9c9c9" stroke-width="1"/><path d="M2.6 4.5h3.8" stroke="#555" stroke-width="1" fill="none"/></svg>
<div class="a" style="left:44.40px;top:480.14px;width:11px;height:7.2px;background:linear-gradient(#bdbdbd,#7f7f7f)"></div>
<div class="t" style="top:476.97px;font-size:10px;line-height:12px;color:#2e3436;left:59.40px;letter-spacing:-0.021px;">November</div>
<svg class="i" style="left:58.90px;top:494.97px" width="10" height="10" viewBox="0 0 10 10"><rect x="0.5" y="0.9" width="8.7" height="8.4" fill="#fff" stroke="#5a5a5a" stroke-width="0.9"/><rect x="0.1" y="0.2" width="9.5" height="2.3" fill="#8c1b2c"/></svg>
<div class="t" style="top:494.41px;font-size:10px;line-height:12px;color:#2e3436;left:72.90px;letter-spacing:0.217px;">Di 30. Nov, 2004</div>
<svg class="i" style="left:58.90px;top:512.41px" width="10" height="10" viewBox="0 0 10 10"><rect x="0.5" y="0.9" width="8.7" height="8.4" fill="#fff" stroke="#5a5a5a" stroke-width="0.9"/><rect x="0.1" y="0.2" width="9.5" height="2.3" fill="#8c1b2c"/></svg>
<div class="t" style="top:511.84px;font-size:10px;line-height:12px;color:#2e3436;left:72.90px;letter-spacing:0.193px;">Do 25. Nov, 2004</div>
<svg class="i" style="left:58.90px;top:529.84px" width="10" height="10" viewBox="0 0 10 10"><rect x="0.5" y="0.9" width="8.7" height="8.4" fill="#fff" stroke="#5a5a5a" stroke-width="0.9"/><rect x="0.1" y="0.2" width="9.5" height="2.3" fill="#8c1b2c"/></svg>
<div class="t" style="top:529.28px;font-size:10px;line-height:12px;color:#2e3436;left:72.90px;letter-spacing:0.163px;">So 14. Nov, 2004</div>
<svg class="i" style="left:58.90px;top:547.28px" width="10" height="10" viewBox="0 0 10 10"><rect x="0.5" y="0.9" width="8.7" height="8.4" fill="#fff" stroke="#5a5a5a" stroke-width="0.9"/><rect x="0.1" y="0.2" width="9.5" height="2.3" fill="#8c1b2c"/></svg>
<div class="t" style="top:546.71px;font-size:10px;line-height:12px;color:#2e3436;left:72.90px;letter-spacing:0.163px;">Sa 13. Nov, 2004</div>
<svg class="i" style="left:58.90px;top:564.72px" width="10" height="10" viewBox="0 0 10 10"><rect x="0.5" y="0.9" width="8.7" height="8.4" fill="#fff" stroke="#5a5a5a" stroke-width="0.9"/><rect x="0.1" y="0.2" width="9.5" height="2.3" fill="#8c1b2c"/></svg>
<div class="t" style="top:564.15px;font-size:10px;line-height:12px;color:#2e3436;left:72.90px;letter-spacing:0.243px;">Do 11. Nov, 2004</div>
<svg class="i" style="left:58.90px;top:582.15px" width="10" height="10" viewBox="0 0 10 10"><rect x="0.5" y="0.9" width="8.7" height="8.4" fill="#fff" stroke="#5a5a5a" stroke-width="0.9"/><rect x="0.1" y="0.2" width="9.5" height="2.3" fill="#8c1b2c"/></svg>
<div class="t" style="top:581.58px;font-size:10px;line-height:12px;color:#2e3436;left:72.90px;letter-spacing:0.210px;">Mi 10. Nov, 2004</div>
</div></div>
<div class="a" style="left:0;top:589px;width:180px;height:6px;background:#dcdcdc"></div>
<div class="a" style="left:87px;top:590.5px;width:6px;height:3px;background:repeating-linear-gradient(90deg,#aaa 0 1px,transparent 1px 2.4px)"></div>
<div class="a" style="left:0.5px;top:594.3px;width:178px;height:84.5px;background:#d5d5d5;border:1px solid #c2c2c2;border-top-color:#e8e8e8;border-left-color:#cacaca;box-sizing:border-box"></div>
<div class="t" style="top:603.74px;font-size:10px;line-height:12px;color:#2e3436;left:39.90px;letter-spacing:0.320px;font-weight:bold;">Titel:</div>
<div class="t" style="top:603.74px;font-size:10px;line-height:12px;color:#2e3436;left:70.80px;letter-spacing:-0.445px;">IMG_5344.JPG</div>
<div class="t" style="top:615.24px;font-size:10px;line-height:12px;color:#2e3436;left:27.80px;letter-spacing:0.590px;font-weight:bold;">Datum:</div>
<div class="t" style="top:615.24px;font-size:10px;line-height:12px;color:#2e3436;left:70.80px;letter-spacing:0.200px;">Di 2. Nov, 2004</div>
<div class="t" style="top:626.53px;font-size:10px;line-height:12px;color:#2e3436;left:42.20px;letter-spacing:0.475px;font-weight:bold;">Zeit:</div>
<div class="t" style="top:626.53px;font-size:10px;line-height:12px;color:#2e3436;left:70.80px;letter-spacing:0.237px;">18:28</div>
<div class="t" style="top:637.83px;font-size:10px;line-height:12px;color:#2e3436;left:31.60px;letter-spacing:0.160px;font-weight:bold;">Größe:</div>
<div class="t" style="top:637.83px;font-size:10px;line-height:12px;color:#2e3436;left:70.80px;letter-spacing:0.550px;">3504 × 2336</div>
<div class="t" style="top:649.13px;font-size:10px;line-height:12px;color:#2e3436;left:6.60px;letter-spacing:0.360px;font-weight:bold;">Belichtung:</div>
<div class="t" style="top:649.13px;font-size:10px;line-height:12px;color:#2e3436;left:70.80px;letter-spacing:0.246px;">1/800 s, <i>f</i>/10</div>
<div class="t" style="top:660.63px;font-size:10px;line-height:12px;color:#2e3436;left:70.80px;letter-spacing:-0.117px;">ISO 100</div>
<div class="a" style="left:186.2px;top:55px;width:904px;height:590.6px;background:#000;overflow:hidden">
<svg class="i" style="left:0;top:0" width="904" height="590.6" viewBox="186.2 55 904 590.6">
<defs>
<radialGradient id="sky" gradientUnits="userSpaceOnUse" cx="575" cy="332" r="640" gradientTransform="translate(575 332) scale(1 0.74) translate(-575 -332)"><stop offset="0.085" stop-color="#ffa424"/><stop offset="0.105" stop-color="#ff9216"/><stop offset="0.15" stop-color="#f98611"/><stop offset="0.20" stop-color="#f07a10"/><stop offset="0.27" stop-color="#e46c0e"/><stop offset="0.37" stop-color="#d4560b"/><stop offset="0.45" stop-color="#c9540c"/><stop offset="0.54" stop-color="#c4510c"/><stop offset="0.65" stop-color="#bf4d0c"/><stop offset="0.78" stop-color="#b94a0c"/><stop offset="1" stop-color="#ac440c"/></radialGradient>
<linearGradient id="skyv" x1="0" y1="55" x2="0" y2="392" gradientUnits="userSpaceOnUse"><stop offset="0" stop-color="#5a0800" stop-opacity="0.07"/><stop offset="0.32" stop-color="#5a0800" stop-opacity="0"/><stop offset="0.8" stop-color="#b01c00" stop-opacity="0"/><stop offset="1" stop-color="#b01c00" stop-opacity="0.10"/></linearGradient>
<linearGradient id="skyh" x1="195" y1="0" x2="1081" y2="0" gradientUnits="userSpaceOnUse"><stop offset="0" stop-color="#901000" stop-opacity="0.05"/><stop offset="0.2" stop-color="#901000" stop-opacity="0"/><stop offset="1" stop-color="#901000" stop-opacity="0"/></linearGradient>
<radialGradient id="skyr" gradientUnits="userSpaceOnUse" cx="1100" cy="385" r="380"><stop offset="0" stop-color="#640800" stop-opacity="0.32"/><stop offset="0.3" stop-color="#700a00" stop-opacity="0.20"/><stop offset="0.55" stop-color="#800c00" stop-opacity="0.08"/><stop offset="1" stop-color="#800c00" stop-opacity="0"/></radialGradient>
<radialGradient id="hglow" gradientUnits="userSpaceOnUse" cx="560" cy="393" r="760" gradientTransform="translate(560 393) scale(1 0.17) translate(-560 -393)"><stop offset="0" stop-color="#ff800e" stop-opacity="0.70"/><stop offset="0.3" stop-color="#ff800e" stop-opacity="0.58"/><stop offset="0.42" stop-color="#ff800e" stop-opacity="0.48"/><stop offset="0.5" stop-color="#ff800e" stop-opacity="0.30"/><stop offset="0.6" stop-color="#ff7a0c" stop-opacity="0.24"/><stop offset="0.72" stop-color="#ff7a0c" stop-opacity="0.16"/><stop offset="1" stop-color="#ff7a0c" stop-opacity="0"/></radialGradient>
<linearGradient id="lgv" x1="0" y1="414" x2="0" y2="645" gradientUnits="userSpaceOnUse"><stop offset="0" stop-color="#7a2808"/><stop offset="0.07" stop-color="#73270a"/><stop offset="0.20" stop-color="#63250a"/><stop offset="0.37" stop-color="#5b240a"/><stop offset="0.50" stop-color="#49200a"/><stop offset="0.63" stop-color="#361808"/><stop offset="0.80" stop-color="#200c04"/><stop offset="1" stop-color="#100600"/></linearGradient>
<linearGradient id="lgm" x1="195" y1="0" x2="470" y2="0" gradientUnits="userSpaceOnUse"><stop offset="0" stop-color="#fff"/><stop offset="0.38" stop-color="#fff"/><stop offset="1" stop-color="#000"/></linearGradient>
<mask id="lgmask" maskUnits="userSpaceOnUse" x="195" y="400" width="300" height="250"><rect x="195" y="400" width="300" height="250" fill="url(#lgm)"/></mask>
<radialGradient id="sun" gradientUnits="userSpaceOnUse" cx="575.1" cy="327.9" r="58.6" gradientTransform="translate(575.1 327.9) scale(1 0.85) translate(-575.1 -327.9)"><stop offset="0.86" stop-color="#ffffff"/><stop offset="0.905" stop-color="#fffbd8"/><stop offset="0.935" stop-color="#ffe868" stop-opacity="0.95"/><stop offset="0.975" stop-color="#ffc030" stop-opacity="0.55"/><stop offset="1" stop-color="#ffa020" stop-opacity="0"/></radialGradient>
<radialGradient id="hill1" gradientUnits="userSpaceOnUse" cx="585" cy="392" r="520" gradientTransform="translate(585 392) scale(1 0.35) translate(-585 -392)"><stop offset="0" stop-color="#de5a0a"/><stop offset="0.25" stop-color="#c64808"/><stop offset="0.5" stop-color="#aa3606"/><stop offset="0.8" stop-color="#962c06"/><stop offset="1" stop-color="#8c2806"/></radialGradient>
<linearGradient id="hill1v" x1="0" y1="388" x2="0" y2="420" gradientUnits="userSpaceOnUse"><stop offset="0" stop-color="#5a0c00" stop-opacity="0.10"/><stop offset="1" stop-color="#5a0c00" stop-opacity="0.36"/></linearGradient>
<linearGradient id="ground" x1="0" y1="410" x2="0" y2="645" gradientUnits="userSpaceOnUse"><stop offset="0" stop-color="#8e2c05"/><stop offset="0.13" stop-color="#802605"/><stop offset="0.21" stop-color="#702004"/><stop offset="0.30" stop-color="#5a1803"/><stop offset="0.38" stop-color="#4a1402"/><stop offset="0.47" stop-color="#3e1002"/><stop offset="0.60" stop-color="#320d02"/><stop offset="0.75" stop-color="#1e0701"/><stop offset="1" stop-color="#0c0300"/></linearGradient>
<linearGradient id="groundh" x1="195" y1="0" x2="1081" y2="0" gradientUnits="userSpaceOnUse"><stop offset="0" stop-color="#100000" stop-opacity="0.0"/><stop offset="0.22" stop-color="#100000" stop-opacity="0.0"/><stop offset="0.36" stop-color="#100000" stop-opacity="0.0"/><stop offset="0.6" stop-color="#100000" stop-opacity="0.0"/><stop offset="0.8" stop-color="#140000" stop-opacity="0.22"/><stop offset="1" stop-color="#140000" stop-opacity="0.50"/></linearGradient>
<radialGradient id="groundc" gradientUnits="userSpaceOnUse" cx="600" cy="414" r="230" gradientTransform="translate(600 414) scale(1 0.36) translate(-600 -414)"><stop offset="0" stop-color="#c04408" stop-opacity="0.50"/><stop offset="0.5" stop-color="#b03c06" stop-opacity="0.22"/><stop offset="1" stop-color="#a03406" stop-opacity="0"/></radialGradient>
<filter id="dim" x="0" y="0" width="100%" height="100%" color-interpolation-filters="sRGB"><feComponentTransfer><feFuncR type="linear" slope="1" intercept="-0.13"/><feFuncG type="linear" slope="1" intercept="-0.13"/><feFuncB type="linear" slope="1" intercept="-0.13"/></feComponentTransfer></filter>
<filter id="b1" x="-5%" y="-5%" width="110%" height="110%"><feGaussianBlur stdDeviation="0.9"/></filter>
<filter id="b2" x="-5%" y="-5%" width="110%" height="110%"><feGaussianBlur stdDeviation="2.2"/></filter>
<clipPath id="pc"><rect x="195" y="55" width="886.2" height="590.6"/></clipPath>
<clipPath id="cc"><rect x="329" y="145" width="620" height="409"/></clipPath>
</defs>

<g filter="url(#dim)"><g id="ph" clip-path="url(#pc)">
<rect x="195" y="55" width="887" height="340" fill="url(#sky)"/>
<rect x="195" y="55" width="887" height="340" fill="url(#skyv)"/>
<rect x="195" y="55" width="887" height="340" fill="url(#skyh)"/>
<rect x="195" y="250" width="887" height="145" fill="url(#hglow)"/>
<rect x="195" y="55" width="887" height="340" fill="url(#skyr)"/>
<ellipse cx="575.1" cy="327.9" rx="58.6" ry="49.9" fill="url(#sun)"/>
<path d="M195.0 430.0L195.0 391.0L200.0 391.4L205.0 391.4L210.0 391.3L215.0 391.0L220.0 390.7L225.0 390.7L230.0 390.7L235.0 391.3L240.0 390.9L245.0 390.5L250.0 389.8L255.0 390.5L260.0 390.9L265.0 390.8L270.0 391.0L275.0 391.2L280.0 391.8L285.0 391.4L290.0 390.6L295.0 389.9L300.0 389.8L305.0 389.7L310.0 389.9L315.0 389.6L320.0 389.5L325.0 389.8L330.0 389.9L335.0 390.6L340.0 390.6L345.0 390.7L350.0 390.2L355.0 390.2L360.0 389.9L365.0 389.5L370.0 389.7L375.0 390.2L380.0 390.7L385.0 390.5L390.0 390.0L395.0 389.5L400.0 389.3L405.0 389.3L410.0 390.2L415.0 390.6L420.0 391.6L425.0 391.5L430.0 392.3L435.0 392.4L440.0 392.1L445.0 391.3L450.0 391.2L455.0 391.5L460.0 392.0L465.0 391.2L470.0 390.6L475.0 390.1L480.0 390.3L485.0 390.4L490.0 389.7L495.0 389.2L500.0 389.9L505.0 390.5L510.0 390.3L515.0 389.5L520.0 388.9L525.0 388.8L530.0 389.3L535.0 389.4L540.0 389.9L545.0 389.5L550.0 389.5L555.0 389.7L560.0 389.3L565.0 389.8L570.0 389.1L575.0 389.4L580.0 388.9L585.0 389.1L590.0 389.6L595.0 390.2L600.0 390.2L605.0 390.1L610.0 389.5L615.0 389.6L620.0 389.5L625.0 389.9L630.0 389.6L635.0 389.7L640.0 389.3L645.0 388.8L650.0 388.0L655.0 387.5L660.0 386.9L665.0 386.2L670.0 386.0L675.0 386.2L680.0 386.4L685.0 386.9L690.0 386.6L695.0 386.8L700.0 387.2L705.0 387.3L710.0 387.4L715.0 387.3L720.0 386.9L725.0 386.5L730.0 386.5L735.0 387.2L740.0 387.2L745.0 387.1L750.0 387.6L755.0 388.9L760.0 389.5L765.0 389.7L770.0 389.6L775.0 390.0L780.0 389.4L785.0 388.6L790.0 388.1L795.0 388.6L800.0 388.7L805.0 389.3L810.0 388.6L815.0 389.2L820.0 389.1L825.0 389.1L830.0 388.4L835.0 388.5L840.0 388.3L845.0 388.3L850.0 388.1L855.0 388.9L860.0 389.3L865.0 389.0L870.0 389.0L875.0 388.6L880.0 388.3L885.0 387.7L890.0 387.9L895.0 387.9L900.0 387.8L905.0 387.7L910.0 388.2L915.0 388.1L920.0 388.1L925.0 388.4L930.0 389.2L935.0 389.5L940.0 389.3L945.0 388.9L950.0 388.4L955.0 387.7L960.0 387.1L965.0 387.9L970.0 388.5L975.0 389.4L980.0 388.5L985.0 388.4L990.0 388.0L995.0 388.6L1000.0 388.3L1005.0 388.8L1010.0 388.1L1015.0 388.3L1020.0 388.1L1025.0 388.9L1030.0 389.1L1035.0 389.0L1040.0 388.9L1045.0 389.0L1050.0 388.7L1055.0 388.5L1060.0 388.5L1065.0 389.0L1070.0 388.7L1075.0 388.6L1080.0 388.6L1082.0 389.0L1082.0 430.0 Z" fill="url(#hill1)"/>
<path d="M195.0 430.0L195.0 391.0L200.0 391.4L205.0 391.4L210.0 391.3L215.0 391.0L220.0 390.7L225.0 390.7L230.0 390.7L235.0 391.3L240.0 390.9L245.0 390.5L250.0 389.8L255.0 390.5L260.0 390.9L265.0 390.8L270.0 391.0L275.0 391.2L280.0 391.8L285.0 391.4L290.0 390.6L295.0 389.9L300.0 389.8L305.0 389.7L310.0 389.9L315.0 389.6L320.0 389.5L325.0 389.8L330.0 389.9L335.0 390.6L340.0 390.6L345.0 390.7L350.0 390.2L355.0 390.2L360.0 389.9L365.0 389.5L370.0 389.7L375.0 390.2L380.0 390.7L385.0 390.5L390.0 390.0L395.0 389.5L400.0 389.3L405.0 389.3L410.0 390.2L415.0 390.6L420.0 391.6L425.0 391.5L430.0 392.3L435.0 392.4L440.0 392.1L445.0 391.3L450.0 391.2L455.0 391.5L460.0 392.0L465.0 391.2L470.0 390.6L475.0 390.1L480.0 390.3L485.0 390.4L490.0 389.7L495.0 389.2L500.0 389.9L505.0 390.5L510.0 390.3L515.0 389.5L520.0 388.9L525.0 388.8L530.0 389.3L535.0 389.4L540.0 389.9L545.0 389.5L550.0 389.5L555.0 389.7L560.0 389.3L565.0 389.8L570.0 389.1L575.0 389.4L580.0 388.9L585.0 389.1L590.0 389.6L595.0 390.2L600.0 390.2L605.0 390.1L610.0 389.5L615.0 389.6L620.0 389.5L625.0 389.9L630.0 389.6L635.0 389.7L640.0 389.3L645.0 388.8L650.0 388.0L655.0 387.5L660.0 386.9L665.0 386.2L670.0 386.0L675.0 386.2L680.0 386.4L685.0 386.9L690.0 386.6L695.0 386.8L700.0 387.2L705.0 387.3L710.0 387.4L715.0 387.3L720.0 386.9L725.0 386.5L730.0 386.5L735.0 387.2L740.0 387.2L745.0 387.1L750.0 387.6L755.0 388.9L760.0 389.5L765.0 389.7L770.0 389.6L775.0 390.0L780.0 389.4L785.0 388.6L790.0 388.1L795.0 388.6L800.0 388.7L805.0 389.3L810.0 388.6L815.0 389.2L820.0 389.1L825.0 389.1L830.0 388.4L835.0 388.5L840.0 388.3L845.0 388.3L850.0 388.1L855.0 388.9L860.0 389.3L865.0 389.0L870.0 389.0L875.0 388.6L880.0 388.3L885.0 387.7L890.0 387.9L895.0 387.9L900.0 387.8L905.0 387.7L910.0 388.2L915.0 388.1L920.0 388.1L925.0 388.4L930.0 389.2L935.0 389.5L940.0 389.3L945.0 388.9L950.0 388.4L955.0 387.7L960.0 387.1L965.0 387.9L970.0 388.5L975.0 389.4L980.0 388.5L985.0 388.4L990.0 388.0L995.0 388.6L1000.0 388.3L1005.0 388.8L1010.0 388.1L1015.0 388.3L1020.0 388.1L1025.0 388.9L1030.0 389.1L1035.0 389.0L1040.0 388.9L1045.0 389.0L1050.0 388.7L1055.0 388.5L1060.0 388.5L1065.0 389.0L1070.0 388.7L1075.0 388.6L1080.0 388.6L1082.0 389.0L1082.0 430.0 Z" fill="url(#hill1v)"/>
<clipPath id="gc"><path d="M195.0 650.0L195.0 426.3L201.0 425.3L207.0 424.2L213.0 423.2L219.0 421.8L225.0 420.4L231.0 419.0L237.0 418.1L243.0 417.6L249.0 417.2L255.0 416.5L261.0 415.4L267.0 415.7L273.0 416.0L279.0 416.4L285.0 416.6L291.0 416.9L297.0 417.6L303.0 418.5L309.0 419.5L315.0 420.3L321.0 420.7L327.0 421.2L333.0 419.8L339.0 418.2L345.0 416.5L351.0 415.8L357.0 415.4L363.0 413.9L369.0 412.7L375.0 411.5L381.0 411.7L387.0 413.1L393.0 414.6L399.0 415.7L405.0 415.7L411.0 415.6L417.0 415.9L423.0 416.2L429.0 416.3L435.0 415.9L441.0 415.4L447.0 414.9L453.0 414.6L459.0 414.5L465.0 414.6L471.0 414.7L477.0 415.0L483.0 415.0L489.0 415.1L495.0 415.2L501.0 415.4L507.0 415.5L513.0 415.4L519.0 415.4L525.0 415.3L531.0 415.4L537.0 415.3L543.0 415.4L549.0 415.4L555.0 415.5L561.0 415.5L567.0 415.4L573.0 415.4L579.0 415.2L585.0 415.0L591.0 414.6L597.0 414.6L603.0 414.9L609.0 415.4L615.0 415.6L621.0 416.0L627.0 416.1L633.0 416.0L639.0 415.6L645.0 415.4L651.0 415.3L657.0 415.5L663.0 415.5L669.0 415.8L675.0 415.8L681.0 415.8L687.0 415.4L693.0 415.3L699.0 415.1L705.0 415.3L711.0 415.5L717.0 415.8L723.0 415.8L729.0 415.8L735.0 415.5L741.0 415.2L747.0 414.8L753.0 414.6L759.0 414.6L765.0 415.0L771.0 415.4L777.0 415.5L783.0 415.3L789.0 415.2L795.0 415.5L801.0 415.5L807.0 415.4L813.0 415.3L819.0 415.5L825.0 415.6L831.0 415.4L837.0 415.3L843.0 415.0L849.0 415.2L855.0 415.2L861.0 415.3L867.0 415.4L873.0 415.5L879.0 415.8L885.0 416.0L891.0 415.9L897.0 415.6L903.0 415.1L909.0 415.1L915.0 415.1L921.0 415.3L927.0 415.4L933.0 415.8L939.0 416.1L945.0 416.3L951.0 416.2L957.0 415.8L963.0 415.6L969.0 415.5L975.0 415.4L981.0 415.1L987.0 414.9L993.0 415.0L999.0 415.5L1005.0 416.0L1011.0 416.2L1017.0 415.9L1023.0 415.4L1029.0 415.0L1035.0 414.9L1041.0 415.2L1047.0 415.6L1053.0 415.9L1059.0 415.9L1065.0 415.9L1071.0 416.0L1077.0 416.0L1082.0 415.9L1082.0 650.0 Z"/></clipPath>
<path d="M195.0 650.0L195.0 426.3L201.0 425.3L207.0 424.2L213.0 423.2L219.0 421.8L225.0 420.4L231.0 419.0L237.0 418.1L243.0 417.6L249.0 417.2L255.0 416.5L261.0 415.4L267.0 415.7L273.0 416.0L279.0 416.4L285.0 416.6L291.0 416.9L297.0 417.6L303.0 418.5L309.0 419.5L315.0 420.3L321.0 420.7L327.0 421.2L333.0 419.8L339.0 418.2L345.0 416.5L351.0 415.8L357.0 415.4L363.0 413.9L369.0 412.7L375.0 411.5L381.0 411.7L387.0 413.1L393.0 414.6L399.0 415.7L405.0 415.7L411.0 415.6L417.0 415.9L423.0 416.2L429.0 416.3L435.0 415.9L441.0 415.4L447.0 414.9L453.0 414.6L459.0 414.5L465.0 414.6L471.0 414.7L477.0 415.0L483.0 415.0L489.0 415.1L495.0 415.2L501.0 415.4L507.0 415.5L513.0 415.4L519.0 415.4L525.0 415.3L531.0 415.4L537.0 415.3L543.0 415.4L549.0 415.4L555.0 415.5L561.0 415.5L567.0 415.4L573.0 415.4L579.0 415.2L585.0 415.0L591.0 414.6L597.0 414.6L603.0 414.9L609.0 415.4L615.0 415.6L621.0 416.0L627.0 416.1L633.0 416.0L639.0 415.6L645.0 415.4L651.0 415.3L657.0 415.5L663.0 415.5L669.0 415.8L675.0 415.8L681.0 415.8L687.0 415.4L693.0 415.3L699.0 415.1L705.0 415.3L711.0 415.5L717.0 415.8L723.0 415.8L729.0 415.8L735.0 415.5L741.0 415.2L747.0 414.8L753.0 414.6L759.0 414.6L765.0 415.0L771.0 415.4L777.0 415.5L783.0 415.3L789.0 415.2L795.0 415.5L801.0 415.5L807.0 415.4L813.0 415.3L819.0 415.5L825.0 415.6L831.0 415.4L837.0 415.3L843.0 415.0L849.0 415.2L855.0 415.2L861.0 415.3L867.0 415.4L873.0 415.5L879.0 415.8L885.0 416.0L891.0 415.9L897.0 415.6L903.0 415.1L909.0 415.1L915.0 415.1L921.0 415.3L927.0 415.4L933.0 415.8L939.0 416.1L945.0 416.3L951.0 416.2L957.0 415.8L963.0 415.6L969.0 415.5L975.0 415.4L981.0 415.1L987.0 414.9L993.0 415.0L999.0 415.5L1005.0 416.0L1011.0 416.2L1017.0 415.9L1023.0 415.4L1029.0 415.0L1035.0 414.9L1041.0 415.2L1047.0 415.6L1053.0 415.9L1059.0 415.9L1065.0 415.9L1071.0 416.0L1077.0 416.0L1082.0 415.9L1082.0 650.0 Z" fill="url(#ground)"/>
<g clip-path="url(#gc)"><rect x="195" y="400" width="887" height="250" fill="url(#groundc)"/><rect x="195" y="400" width="887" height="250" fill="url(#groundh)"/><rect x="195" y="400" width="300" height="250" fill="url(#lgv)" mask="url(#lgmask)"/></g>
<path d="M195.0 426.3L201.0 425.3L207.0 424.2L213.0 423.2L219.0 421.8L225.0 420.4L231.0 419.0L237.0 418.1L243.0 417.6L249.0 417.2L255.0 416.5L261.0 415.4L267.0 415.7L273.0 416.0L279.0 416.4L285.0 416.6L291.0 416.9L297.0 417.6L303.0 418.5L309.0 419.5L315.0 420.3L321.0 420.7L327.0 421.2L333.0 419.8L339.0 418.2L345.0 416.5L351.0 415.8L357.0 415.4L363.0 413.9L369.0 412.7L375.0 411.5L381.0 411.7L387.0 413.1L393.0 414.6L399.0 415.7L405.0 415.7L411.0 415.6L417.0 415.9L423.0 416.2L429.0 416.3L435.0 415.9L441.0 415.4L447.0 414.9L453.0 414.6L459.0 414.5L465.0 414.6L471.0 414.7L477.0 415.0L483.0 415.0L489.0 415.1L495.0 415.2L501.0 415.4L507.0 415.5L513.0 415.4L519.0 415.4L525.0 415.3L531.0 415.4L537.0 415.3L543.0 415.4L549.0 415.4L555.0 415.5L561.0 415.5L567.0 415.4L573.0 415.4L579.0 415.2L585.0 415.0L591.0 414.6L597.0 414.6L603.0 414.9L609.0 415.4L615.0 415.6L621.0 416.0L627.0 416.1L633.0 416.0L639.0 415.6L645.0 415.4L651.0 415.3L657.0 415.5L663.0 415.5L669.0 415.8L675.0 415.8L681.0 415.8L687.0 415.4L693.0 415.3L699.0 415.1L705.0 415.3L711.0 415.5L717.0 415.8L723.0 415.8L729.0 415.8L735.0 415.5L741.0 415.2L747.0 414.8L753.0 414.6L759.0 414.6L765.0 415.0L771.0 415.4L777.0 415.5L783.0 415.3L789.0 415.2L795.0 415.5L801.0 415.5L807.0 415.4L813.0 415.3L819.0 415.5L825.0 415.6L831.0 415.4L837.0 415.3L843.0 415.0L849.0 415.2L855.0 415.2L861.0 415.3L867.0 415.4L873.0 415.5L879.0 415.8L885.0 416.0L891.0 415.9L897.0 415.6L903.0 415.1L909.0 415.1L915.0 415.1L921.0 415.3L927.0 415.4L933.0 415.8L939.0 416.1L945.0 416.3L951.0 416.2L957.0 415.8L963.0 415.6L969.0 415.5L975.0 415.4L981.0 415.1L987.0 414.9L993.0 415.0L999.0 415.5L1005.0 416.0L1011.0 416.2L1017.0 415.9L1023.0 415.4L1029.0 415.0L1035.0 414.9L1041.0 415.2L1047.0 415.6L1053.0 415.9L1059.0 415.9L1065.0 415.9L1071.0 416.0L1077.0 416.0L1082.0 415.9" fill="none" stroke="#5a1602" stroke-opacity="0.55" stroke-width="1.2"/>
<g filter="url(#b1)" fill="#702404" opacity="0.85">
<path d="M788 415c-6-6-6-15 0-20c1-7 8-11 13-11c3-5 10-8 15-5c6-1 11 3 12 8c6 3 8 10 5 15c3 5 1 10-3 13z"/>
<path d="M890 416c-3-5-2-10 2-13c1-5 6-7 10-6c5 0 9 4 9 8c3 4 2 9-1 11z"/>
<path d="M655 414c-2-4 0-8 3-9c2-3 6-3 8 0c3 1 4 5 2 9z" opacity="0.6"/>
</g>
<path d="M643.6 473.0Q645.3 430.5 644.9 396.1M656.0 473.0Q653.3 430.5 643.9 388.3M644.3 473.0Q640.3 430.5 636.9 409.9M662.8 473.0Q658.9 430.5 662.1 402.1M656.3 473.0Q663.9 430.5 666.6 399.5M657.5 473.0Q652.3 430.5 645.3 404.7M645.6 473.0Q638.8 430.5 632.5 407.0M659.0 473.0Q668.5 430.5 669.6 403.7M648.6 473.0Q657.2 430.5 657.1 397.8M664.1 473.0Q655.7 430.5 652.9 391.0M666.9 473.0Q664.0 430.5 665.1 401.8M652.2 473.0Q651.5 430.5 649.0 395.7M692.7 473.0Q702.6 435.5 704.0 413.0M701.4 473.0Q704.9 435.5 715.2 412.8M701.5 473.0Q708.7 435.5 714.6 417.9M696.8 473.0Q693.5 435.5 688.8 416.3M683.1 473.0Q681.9 435.5 670.9 416.8M676.8 473.0Q677.5 435.5 685.2 407.0M683.4 473.0Q682.6 435.5 690.9 417.2M693.7 473.0Q685.6 435.5 680.9 413.8M702.2 473.0Q713.9 435.5 715.6 409.1M735.9 478.0Q725.3 438.0 724.1 411.2M732.3 478.0Q727.6 438.0 729.7 411.4M727.4 478.0Q737.1 438.0 737.7 404.9M754.7 478.0Q753.2 438.0 751.3 408.1M746.6 478.0Q749.1 438.0 749.3 410.3M756.1 478.0Q758.4 438.0 756.3 407.5M733.6 478.0Q731.0 438.0 728.0 419.5M743.5 478.0Q737.5 438.0 729.9 407.1M726.6 478.0Q723.9 438.0 729.9 411.9M746.1 478.0Q744.1 438.0 745.1 412.9M806.6 487.0Q805.6 444.5 813.3 402.5M805.6 487.0Q811.7 444.5 818.6 407.5M803.0 487.0Q798.6 444.5 797.9 410.0M795.8 487.0Q795.9 444.5 798.5 408.6M808.7 487.0Q804.4 444.5 795.5 414.5M793.9 487.0Q787.4 444.5 786.2 419.7M790.0 487.0Q785.1 444.5 788.2 417.4M794.3 487.0Q791.4 444.5 789.6 420.3M811.4 487.0Q808.2 444.5 802.1 409.4M812.3 487.0Q807.8 444.5 810.9 407.0M800.9 487.0Q800.0 444.5 792.3 419.7M789.9 487.0Q788.2 444.5 783.7 419.8M862.8 491.0Q858.6 438.5 858.5 388.9M862.4 491.0Q858.4 438.5 856.0 393.6M850.4 491.0Q845.7 438.5 847.9 406.3M837.1 491.0Q848.2 438.5 849.6 405.4M850.9 491.0Q854.4 438.5 863.5 406.4M860.9 491.0Q865.8 438.5 870.3 400.6M846.2 491.0Q839.7 438.5 841.8 391.0M855.8 491.0Q848.3 438.5 849.9 403.8M865.9 491.0Q872.6 438.5 871.3 406.3M865.8 491.0Q869.3 438.5 867.9 386.3M842.5 491.0Q839.9 438.5 836.9 400.6M850.2 491.0Q854.8 438.5 862.5 399.5M845.1 491.0Q853.0 438.5 855.2 396.5M848.3 491.0Q847.2 438.5 839.8 397.8M842.5 491.0Q849.6 438.5 850.6 406.3M863.4 491.0Q860.1 438.5 849.6 399.8M865.6 490.0Q862.7 449.0 859.2 413.9M877.5 490.0Q872.2 449.0 876.8 425.1M865.8 490.0Q856.2 449.0 855.3 410.7M895.2 490.0Q900.2 449.0 905.1 409.9M874.1 490.0Q873.0 449.0 868.9 415.7M882.8 490.0Q879.1 449.0 878.9 412.2M868.0 490.0Q867.5 449.0 869.5 423.8M866.6 490.0Q863.1 449.0 857.6 416.2M889.0 490.0Q888.6 449.0 885.7 425.6M877.8 490.0Q878.1 449.0 874.2 418.9M915.5 488.0Q915.6 456.0 920.9 434.1M919.1 488.0Q921.1 456.0 924.6 425.6M915.6 488.0Q919.7 456.0 926.3 444.6M930.7 488.0Q934.4 456.0 938.9 429.8M905.9 488.0Q914.2 456.0 914.7 438.6M927.4 488.0Q930.3 456.0 932.1 440.1M905.3 488.0Q903.0 456.0 907.8 424.1M926.8 488.0Q916.4 456.0 914.0 426.0M642.2 470.0Q641.1 444.0 633.2 418.5M617.9 470.0Q626.1 444.0 627.5 432.8M644.5 470.0Q640.9 444.0 646.7 435.6M638.6 470.0Q634.8 444.0 638.9 433.7M638.0 470.0Q642.3 444.0 650.1 419.3M632.0 470.0Q633.4 444.0 641.2 423.3M767.0 480.0Q767.6 449.0 770.2 434.6M770.8 480.0Q768.5 449.0 767.9 425.7M761.7 480.0Q760.8 449.0 761.7 439.4M782.9 480.0Q780.7 449.0 773.4 433.2M780.6 480.0Q782.2 449.0 781.0 428.6M787.7 480.0Q785.3 449.0 777.9 420.1M788.3 480.0Q790.8 449.0 788.8 427.7M765.0 480.0Q762.6 449.0 758.4 422.4M954.1 490.0Q954.9 465.0 946.6 455.2M953.5 490.0Q959.9 465.0 959.2 449.1M962.7 490.0Q954.7 465.0 956.2 444.8M959.3 490.0Q956.3 465.0 956.1 443.8M954.3 490.0Q963.1 465.0 962.0 443.2M959.3 490.0Q964.1 465.0 962.1 450.3M1020.3 490.0Q1023.3 468.0 1021.9 456.6M1021.4 490.0Q1024.6 468.0 1018.6 462.1M1009.0 490.0Q1007.3 468.0 1001.4 451.2M1015.6 490.0Q1019.5 468.0 1028.5 464.8M1000.1 490.0Q998.7 468.0 993.3 450.1" fill="none" stroke="#4a1403" stroke-width="1.25" opacity="0.62" filter="url(#b1)"/>
<path d="M658.0 486.9q0.7 14.4 3.7 28.7M819.6 504.9q-1.1 21.2 -5.5 42.5M639.9 493.9q1.0 14.9 4.8 29.7M1033.4 540.2q0.9 10.2 4.4 20.3M971.4 516.8q0.6 11.8 2.9 23.6M690.7 477.2q1.1 19.0 5.4 38.0M761.6 457.8q-1.2 14.7 -5.9 29.4M1028.6 548.1q0.9 11.6 4.4 23.2M916.5 475.7q-1.4 26.0 -6.8 52.0M525.1 490.2q1.3 15.6 6.4 31.1M527.5 467.4q1.0 23.3 5.1 46.7M406.9 529.7q-0.4 18.7 -2.0 37.5M432.0 496.8q-0.9 23.5 -4.3 47.1M730.7 483.3q0.4 11.4 2.2 22.8M1008.0 483.7q-0.5 14.9 -2.4 29.8M1001.3 489.2q0.7 9.2 3.5 18.4M503.7 466.5q-0.6 17.6 -3.2 35.3M756.6 456.6q1.4 10.4 6.8 20.8M1002.2 492.6q0.2 9.4 0.9 18.8M803.5 481.3q0.3 26.8 1.3 53.5M542.3 479.9q-0.7 12.6 -3.5 25.2M328.8 496.6q0.9 18.9 4.3 37.9M1011.2 484.1q-1.3 24.0 -6.3 48.0M1016.3 506.3q0.4 24.5 2.2 49.0M553.1 484.2q-1.2 10.4 -5.8 20.8M759.6 455.2q-0.9 13.9 -4.7 27.8M456.9 501.9q-0.0 22.4 -0.2 44.8M543.4 487.7q-0.2 18.5 -0.8 37.1M1053.1 478.9q-0.8 22.9 -3.8 45.8M477.3 476.7q0.7 9.5 3.4 19.0M698.7 480.9q1.1 16.8 5.5 33.6M486.6 509.6q0.3 19.3 1.6 38.6M521.4 479.2q0.7 27.5 3.6 54.9M464.1 491.3q0.1 18.6 0.3 37.2M365.4 505.2q0.7 22.0 3.7 44.0M593.6 497.1q-0.1 18.9 -0.4 37.8M1071.2 488.4q-0.8 22.9 -4.0 45.8M432.0 499.4q0.6 18.6 2.8 37.2M1075.9 485.6q1.1 10.8 5.7 21.7M937.8 493.7q-0.8 23.0 -3.9 46.1M770.9 457.4q0.8 24.7 4.1 49.5M574.7 495.8q0.1 12.5 0.5 25.0M434.0 487.2q0.1 15.4 0.6 30.9M922.0 486.7q0.7 9.1 3.5 18.3M495.9 464.5q0.9 23.0 4.6 46.0M491.5 480.8q-0.7 19.0 -3.6 37.9M633.6 472.7q0.5 13.6 2.5 27.2M470.4 482.4q-0.4 12.7 -1.9 25.4M455.6 478.8q0.1 17.1 0.4 34.1M539.5 495.3q0.2 11.9 0.8 23.7M340.9 489.6q0.8 14.9 4.2 29.7M976.5 493.2q-0.9 20.4 -4.6 40.8M826.2 458.8q-0.2 23.4 -1.0 46.8M480.3 469.5q-0.6 23.8 -3.0 47.6M410.2 514.5q-0.9 13.6 -4.3 27.3M984.1 490.1q-0.9 16.0 -4.6 32.0M1020.7 493.0q-0.5 23.1 -2.5 46.3M1050.0 485.2q-0.5 22.8 -2.7 45.5M960.9 493.1q-1.1 11.7 -5.5 23.3M920.5 476.8q0.4 25.4 2.2 50.9M881.4 463.0q1.0 12.9 5.1 25.9M939.4 482.6q-0.6 17.1 -3.2 34.1M475.2 496.8q0.2 9.7 1.0 19.3M425.0 500.5q1.1 14.6 5.5 29.2M1029.4 475.7q-0.4 12.8 -1.9 25.7M971.9 486.2q-0.8 26.4 -3.8 52.9M756.8 471.7q0.6 12.7 3.1 25.3M888.7 476.3q-0.0 26.4 -0.2 52.8M586.8 479.2q0.8 25.3 3.8 50.5M397.0 487.6q1.0 18.0 4.9 36.0M809.5 455.8q1.0 26.2 5.0 52.4M632.0 524.5q-0.3 17.8 -1.3 35.5M1062.2 532.1q-1.3 12.4 -6.6 24.8M613.8 478.6q-0.7 12.7 -3.4 25.4M457.9 491.3q-0.7 20.3 -3.4 40.7M471.2 483.4q0.8 19.4 3.9 38.8M669.3 495.7q0.3 14.1 1.6 28.2M993.9 490.0q0.7 26.6 3.7 53.2M867.9 474.9q1.3 18.1 6.7 36.2M327.1 495.1q1.3 20.3 6.4 40.6M231.3 501.3q-0.8 11.7 -4.2 23.3M912.4 469.8q1.1 9.9 5.4 19.7M432.9 487.8q-0.1 10.8 -0.3 21.6M469.0 472.0q-0.6 20.9 -2.8 41.8M488.3 473.7q-0.1 9.1 -0.5 18.1M972.0 472.0q-0.5 18.9 -2.5 37.9M602.3 477.0q0.4 10.7 2.1 21.4M458.4 518.8q0.6 26.2 3.1 52.4M718.4 477.4q-0.5 10.3 -2.5 20.6M1017.9 488.1q-0.2 14.5 -1.1 28.9M270.7 493.1q-1.2 16.1 -6.2 32.1M651.5 500.2q-0.7 13.9 -3.7 27.7M639.9 488.9q-1.0 16.5 -5.2 33.0M847.4 482.1q-0.1 21.2 -0.4 42.3M896.1 491.7q-1.1 12.9 -5.6 25.8M376.8 495.5q0.3 24.0 1.6 48.1M200.1 516.7q-0.3 24.3 -1.6 48.7M1036.2 506.7q-0.5 27.5 -2.5 54.9M720.0 461.4q0.5 24.0 2.3 48.0M348.2 490.3q0.9 20.1 4.6 40.2M701.9 489.5q-1.1 26.1 -5.5 52.2M216.2 513.6q-1.4 26.0 -6.9 52.0M778.0 466.9q0.6 12.7 3.0 25.5M733.0 467.3q-0.5 26.6 -2.4 53.2M617.3 505.1q0.6 13.8 3.2 27.7M591.7 480.5q-1.1 10.7 -5.5 21.3M636.9 476.4q-0.7 22.4 -3.4 44.8M595.0 488.4q-1.4 18.4 -6.9 36.8M908.3 464.0q-0.8 18.5 -4.0 37.0M350.2 499.0q0.3 19.7 1.5 39.3M203.5 504.6q-0.2 21.1 -1.2 42.2M492.3 465.2q0.2 19.0 1.1 38.0M942.6 476.4q-0.6 20.6 -3.0 41.1M709.5 463.3q-1.3 16.1 -6.5 32.2M925.7 472.8q1.2 22.8 5.8 45.5M954.7 487.3q-0.5 26.2 -2.5 52.4M402.2 517.8q0.4 21.0 1.8 42.0M821.3 463.1q0.2 13.0 0.9 26.0M574.1 484.0q0.4 19.1 1.9 38.1M821.0 465.4q0.7 23.6 3.5 47.1M313.1 491.3q-1.1 14.6 -5.6 29.2M516.5 456.7q-0.8 11.1 -4.0 22.2M1052.6 484.5q0.3 18.1 1.4 36.3M476.7 488.6q-0.2 11.5 -0.8 23.0M945.0 497.0q-0.2 23.8 -1.1 47.7M891.9 467.5q1.1 24.0 5.6 48.0M366.5 490.4q0.3 17.7 1.3 35.5M666.9 467.5q-1.0 15.3 -5.0 30.7M479.9 471.1q0.9 26.9 4.7 53.7M428.9 494.9q0.8 17.4 4.2 34.7M245.7 496.5q-0.7 15.7 -3.4 31.4M518.6 484.9q-0.8 14.6 -3.8 29.2M414.4 514.6q-0.3 24.2 -1.5 48.4M1032.8 476.4q0.9 15.4 4.7 30.8M917.1 464.8q1.1 20.2 5.3 40.3M437.2 525.4q0.2 18.4 1.0 36.7M667.8 481.8q-0.4 20.7 -1.9 41.4M817.5 458.6q0.1 22.6 0.7 45.1M274.7 502.8q-0.8 15.8 -4.2 31.6M650.0 492.7q-1.4 12.9 -6.9 25.8M569.3 483.4q1.3 13.9 6.5 27.7M978.5 519.9q0.4 14.2 1.9 28.4M684.4 470.5q0.1 18.8 0.6 37.7M387.9 483.6q1.0 12.1 5.1 24.2M770.3 459.1q1.1 14.7 5.5 29.3M999.9 511.0q-1.4 18.1 -7.0 36.2M1020.1 499.0q0.5 22.2 2.6 44.4M285.1 487.7q0.5 18.1 2.7 36.2M199.2 512.9q-1.3 9.5 -6.6 19.1M483.4 474.3q-0.9 24.1 -4.3 48.2M800.3 459.0q0.7 16.2 3.4 32.3M961.9 473.6q0.1 11.5 0.5 23.0M1018.2 491.5q0.0 11.7 0.2 23.4M987.6 494.2q0.1 14.5 0.7 29.1M1030.5 488.7q-0.5 26.3 -2.4 52.7M374.2 533.5q-0.3 14.0 -1.6 28.1M1027.3 479.8q-0.9 14.5 -4.3 29.0M551.1 477.8q-0.9 23.3 -4.3 46.7M663.4 470.8q1.1 15.6 5.4 31.2M1060.2 498.4q0.4 16.5 1.8 33.0M430.2 495.9q0.1 12.0 0.7 24.0M1047.5 484.8q-0.7 26.5 -3.5 52.9M652.6 507.9q1.3 14.8 6.5 29.6M1034.7 477.4q-0.7 11.7 -3.5 23.3M1027.3 530.8q1.3 15.4 6.4 30.8M707.8 494.0q-0.5 22.6 -2.5 45.1M568.1 504.6q-0.7 15.5 -3.7 31.0M480.8 474.1q0.9 10.0 4.4 20.1M784.6 474.7q0.2 26.0 1.0 51.9M497.9 470.3q0.3 19.7 1.4 39.4M522.3 487.8q-1.3 14.2 -6.5 28.3M580.6 484.9q1.2 26.3 5.8 52.5M482.9 467.4q-1.2 11.5 -5.9 22.9M754.8 455.8q-0.7 23.5 -3.5 47.0M486.1 488.5q-1.3 13.2 -6.7 26.4M770.0 461.0q0.1 15.1 0.6 30.1M222.2 518.6q-1.0 12.2 -5.0 24.5M879.3 467.4q0.0 22.9 0.2 45.9M840.9 462.0q-0.6 15.0 -3.1 30.0M702.5 474.5q0.9 22.9 4.3 45.8M782.5 465.0q-1.0 13.6 -5.1 27.1M572.4 502.0q-0.3 27.4 -1.3 54.8M797.2 457.7q0.4 12.2 2.1 24.3M798.2 482.8q-1.1 14.0 -5.3 28.0M558.8 511.8q1.0 23.7 5.0 47.3M876.4 469.1q-0.3 10.0 -1.6 20.1M855.4 472.5q1.3 13.8 6.6 27.7M426.3 505.2q0.6 18.6 3.0 37.3M645.9 470.3q0.2 23.9 1.1 47.9M1043.7 500.8q0.4 26.4 2.1 52.9M569.9 508.1q-0.7 12.3 -3.6 24.7M635.3 471.7q-0.6 10.0 -3.0 19.9M678.8 489.6q1.1 12.3 5.4 24.5M466.9 509.4q-0.8 17.5 -4.1 35.0M277.3 518.0q-0.5 26.3 -2.6 52.7M516.4 475.9q-1.4 23.3 -7.0 46.7M958.0 493.7q-0.3 27.3 -1.6 54.6M913.2 475.2q-0.8 26.0 -3.9 52.1M531.8 468.2q-1.0 14.9 -4.9 29.8M996.9 520.1q0.5 15.3 2.3 30.5M496.5 488.0q0.3 14.4 1.4 28.8M1021.2 485.0q0.5 20.4 2.5 40.8M1066.6 488.1q1.1 16.2 5.7 32.5M604.0 500.5q0.6 14.1 3.0 28.2M1011.0 476.0q-0.3 11.7 -1.7 23.4M617.6 514.5q0.4 13.6 2.0 27.2M772.0 476.1q-1.3 19.6 -6.3 39.1M567.3 483.1q0.7 26.4 3.7 52.8M547.4 470.8q-0.8 13.3 -4.1 26.5M968.3 501.4q0.4 16.8 2.0 33.5M484.5 493.2q-0.1 12.0 -0.6 24.0M466.6 475.6q1.1 25.5 5.3 51.1M964.6 475.0q-0.9 21.4 -4.6 42.8M540.8 482.8q1.3 23.2 6.4 46.4M326.1 510.7q-1.4 25.2 -6.8 50.5M922.1 465.5q-0.3 24.4 -1.7 48.8M863.5 459.8q-0.8 11.3 -3.8 22.7M1029.6 498.0q0.8 15.6 3.9 31.2M270.0 492.2q0.7 14.4 3.3 28.7M816.7 469.0q-0.8 27.2 -4.2 54.4M565.4 492.2q-1.1 10.9 -5.6 21.7M721.5 477.5q-1.2 11.5 -6.0 23.0M596.9 478.8q0.4 17.9 2.2 35.9M337.2 508.6q0.8 10.5 4.2 21.0M560.0 494.3q-0.1 16.3 -0.5 32.7M1057.6 483.1q0.1 20.1 0.7 40.1M425.3 508.2q1.3 14.7 6.5 29.3M430.3 488.8q1.3 26.5 6.3 53.0M911.6 475.4q-1.4 18.3 -6.9 36.7M608.5 524.5q-0.2 18.9 -1.2 37.9M425.4 490.9q0.8 19.9 4.1 39.9M718.4 474.4q-0.5 17.0 -2.6 34.0M550.3 463.8q1.3 14.3 6.6 28.5M674.6 506.9q1.0 20.0 5.0 40.0M913.0 489.0q-0.6 26.8 -3.2 53.6M787.9 469.4q-1.2 25.5 -6.0 51.0M491.1 464.7q0.3 18.8 1.3 37.7M467.7 489.2q1.4 25.5 6.8 51.1M1058.6 486.0q1.2 22.8 6.0 45.6M630.5 525.4q-1.3 27.0 -6.7 54.0M828.4 457.2q-0.4 24.1 -1.8 48.3M1002.4 484.0q-0.2 27.3 -0.8 54.7M1070.6 485.3q0.7 25.0 3.7 50.1M463.1 486.4q-0.2 16.7 -1.1 33.3M835.2 480.9q0.6 21.6 3.2 43.3M405.6 508.2q-0.4 18.7 -1.9 37.5M568.7 482.1q1.3 24.5 6.5 48.9M862.3 458.0q-1.4 20.5 -6.8 41.0M401.8 485.6q1.1 26.7 5.6 53.4M208.8 499.8q1.3 23.9 6.3 47.7M900.5 469.7q0.2 10.6 1.1 21.2M916.1 498.3q-0.9 10.3 -4.6 20.6M1023.3 488.7q-0.4 16.1 -2.2 32.1M209.0 503.0q0.3 16.7 1.5 33.3M784.6 491.6q-0.4 19.2 -1.8 38.4M740.1 469.3q-0.9 13.1 -4.7 26.2M825.1 496.8q0.6 10.7 3.1 21.5M823.5 466.3q-0.3 22.7 -1.4 45.5M621.1 474.3q-1.1 15.7 -5.6 31.4M747.7 466.7q0.7 14.4 3.6 28.7M802.1 463.2q0.2 11.0 0.9 22.1M606.5 481.9q-1.0 24.4 -4.9 48.8M829.2 457.8q1.0 22.0 5.0 44.0M727.6 478.8q-0.7 15.3 -3.6 30.6M403.0 499.9q0.1 24.8 0.4 49.6M611.5 509.3q0.5 21.4 2.4 42.8M363.8 489.2q0.8 12.8 4.0 25.5M698.3 463.2q1.0 27.1 5.2 54.2M636.0 491.8q-0.8 14.0 -3.9 28.1M662.8 488.8q-0.1 18.4 -0.5 36.9M897.7 478.3q0.9 16.0 4.3 31.9M411.2 481.5q-0.3 17.0 -1.7 34.0M360.9 506.8q-0.3 9.4 -1.4 18.7M712.7 469.3q-1.0 13.6 -5.1 27.2M1079.5 495.2q0.7 27.0 3.4 53.9M468.6 486.6q-1.3 16.0 -6.6 32.0M1073.0 480.2q1.1 11.8 5.4 23.7M908.7 465.6q0.0 26.7 0.1 53.4M812.2 498.5q-0.4 18.1 -2.1 36.1M526.7 483.3q-0.2 14.6 -1.1 29.2M652.0 500.5q-0.9 16.3 -4.5 32.7M703.6 536.6q0.5 14.2 2.3 28.4M626.1 476.2q1.0 22.4 4.8 44.9M268.2 520.3q0.4 14.0 1.9 28.0M358.0 523.9q0.6 18.3 3.2 36.6M539.4 479.0q-1.2 14.5 -6.1 29.0M514.2 458.2q1.2 23.1 6.1 46.1M517.2 461.3q0.9 21.1 4.7 42.1M918.6 474.1q1.1 26.8 5.7 53.5M938.0 481.9q0.7 23.4 3.4 46.8M800.2 481.9q-0.9 25.5 -4.3 51.0M1046.5 495.4q0.4 15.3 1.8 30.6M655.4 474.9q0.9 9.7 4.7 19.3M517.6 481.4q-0.3 27.1 -1.7 54.2M743.9 480.2q0.6 26.0 2.8 52.0M460.4 474.7q-0.3 20.9 -1.3 41.7M866.2 486.9q0.2 10.4 1.0 20.8M1011.6 490.7q0.1 22.7 0.5 45.3M383.2 487.1q-1.0 14.1 -4.8 28.3M325.5 508.7q0.3 9.5 1.5 19.0M822.3 506.0q-0.2 19.0 -1.1 38.1M214.1 497.9q0.4 22.2 2.1 44.3M712.0 477.8q-1.2 21.9 -5.9 43.8M599.5 486.4q-1.3 22.8 -6.5 45.5M985.3 497.1q-0.0 17.0 -0.2 34.0M1078.9 513.7q-0.2 20.2 -1.1 40.4M508.3 481.3q0.0 10.5 0.2 21.0M631.2 483.0q0.6 19.2 2.8 38.5M358.4 499.5q0.6 16.9 3.0 33.8M411.4 488.8q0.1 24.7 0.4 49.3M794.1 464.0q-0.9 13.6 -4.5 27.3M752.9 460.8q-0.2 10.5 -0.8 21.1M1001.0 474.9q1.0 17.3 5.1 34.7M1053.3 487.3q-0.6 27.2 -3.0 54.5M711.7 467.3q0.4 15.5 2.1 31.0M761.7 459.8q0.1 18.1 0.4 36.1M576.0 475.7q1.2 25.9 6.0 51.7M371.7 486.5q-0.9 17.0 -4.7 34.1M692.8 490.3q-0.7 23.6 -3.7 47.1M908.3 536.7q-0.3 12.0 -1.6 24.0M751.7 497.7q-1.4 24.1 -6.8 48.2M610.2 496.3q-1.0 22.6 -5.2 45.2M806.3 454.6q-1.4 19.7 -7.0 39.3M836.7 487.9q1.1 11.3 5.7 22.7M790.7 457.4q0.3 13.6 1.7 27.1M408.8 479.4q-1.3 22.7 -6.4 45.4M474.2 494.0q-0.7 23.4 -3.6 46.8M602.0 497.2q0.9 22.2 4.4 44.3M901.2 485.4q0.5 12.2 2.5 24.3M613.6 475.0q-1.3 18.2 -6.7 36.5M982.3 490.8q-1.2 21.9 -6.0 43.9M611.7 498.2q-0.6 16.0 -2.9 32.0M446.6 485.9q0.5 24.1 2.7 48.1M888.2 513.8q1.0 18.7 5.0 37.4M715.9 462.9q0.4 19.7 2.0 39.4M938.8 472.7q-1.2 24.7 -6.1 49.3M489.8 465.0q0.3 16.2 1.6 32.4M316.0 512.5q-0.1 15.5 -0.4 31.0M912.6 486.0q-0.3 16.6 -1.4 33.2M285.5 488.0q0.5 11.2 2.3 22.5M417.9 487.6q-1.1 21.4 -5.7 42.8M1017.2 485.5q-0.3 26.4 -1.4 52.7M1011.3 506.5q0.1 25.8 0.5 51.5M778.3 460.1q-0.9 16.9 -4.4 33.8M486.9 516.9q0.9 19.2 4.7 38.4M224.9 501.0q-0.4 14.7 -2.2 29.3M335.9 542.0q1.2 26.1 6.2 52.2M419.2 480.8q-0.6 24.4 -3.0 48.8M519.0 470.4q1.0 10.7 4.8 21.4M970.1 480.5q0.6 22.0 3.0 44.0M933.9 482.1q0.4 13.3 1.9 26.6M746.8 471.2q-0.7 14.2 -3.3 28.5M1013.3 491.2q1.3 9.9 6.3 19.8M351.1 487.0q1.1 10.1 5.5 20.3M233.8 503.7q-1.1 12.5 -5.6 25.1M280.3 487.0q1.3 20.5 6.6 41.0M768.5 455.5q-0.9 21.4 -4.6 42.9M750.3 478.2q-0.3 13.4 -1.5 26.8M252.3 498.0q-1.2 22.3 -6.2 44.7M1032.5 513.0q-0.9 12.5 -4.3 25.0M234.9 499.2q-0.9 22.0 -4.4 43.9M411.6 498.9q1.2 18.9 6.0 37.8M815.4 464.2q0.3 18.1 1.5 36.3M514.1 462.5q1.2 16.1 6.2 32.2M930.2 500.9q-0.9 23.6 -4.5 47.2M321.2 485.8q0.7 23.7 3.5 47.4M268.6 493.2q1.0 13.3 5.2 26.6M884.7 481.9q-1.0 25.8 -5.2 51.6M525.7 464.7q1.0 20.9 5.2 41.7M943.7 472.5q-0.8 15.9 -3.9 31.8M848.4 472.4q0.1 23.5 0.3 46.9M431.3 499.5q-0.5 19.2 -2.7 38.3M505.9 473.5q0.3 20.0 1.5 40.0M286.3 505.3q0.6 20.7 3.2 41.5M969.6 480.1q1.4 14.1 6.9 28.2M786.6 485.7q1.1 19.9 5.3 39.8M572.7 485.3q-0.6 21.6 -2.8 43.2M375.9 507.9q-0.1 9.4 -0.4 18.9M968.5 471.7q-1.1 9.9 -5.6 19.7M490.6 466.0q0.1 10.9 0.5 21.9M338.4 488.9q0.9 24.1 4.7 48.2M1027.9 480.9q0.2 19.2 0.9 38.5M421.6 510.9q0.6 20.0 3.0 40.0M859.8 468.3q1.2 14.2 5.9 28.3M1010.1 497.7q0.3 20.6 1.4 41.2M773.4 452.8q-1.0 13.4 -5.0 26.9M813.5 492.1q0.7 22.7 3.4 45.4M630.5 477.3q1.4 14.2 6.9 28.4M1067.4 491.9q-0.6 23.9 -2.9 47.7M566.0 501.2q-0.5 19.8 -2.4 39.6M624.3 499.2q1.0 25.4 5.0 50.9M651.8 485.6q1.0 15.9 5.0 31.8M999.1 503.1q-0.3 26.5 -1.4 53.1M997.2 488.6q0.6 19.6 2.9 39.2M426.7 495.5q-0.2 19.0 -0.8 37.9M914.0 466.3q0.8 12.5 4.0 25.0M450.0 503.1q-0.7 23.6 -3.6 47.3M735.1 477.1q0.3 27.0 1.3 54.0M1037.7 499.7q-0.6 24.7 -2.8 49.4M566.7 500.5q-1.0 15.7 -4.8 31.4M804.6 464.3q0.9 26.7 4.4 53.5M893.5 488.5q-0.9 24.3 -4.3 48.6M867.2 506.3q0.3 13.6 1.7 27.2M636.4 470.7q1.2 11.5 6.0 23.0M430.8 506.8q-0.2 27.4 -1.1 54.7M610.9 476.0q0.3 21.6 1.3 43.2M720.4 496.9q-1.1 19.0 -5.6 38.0M1076.8 480.5q1.2 11.3 6.1 22.6M796.7 471.0q-0.7 23.5 -3.3 46.9M671.7 470.8q-1.3 10.5 -6.7 21.1M817.2 461.7q0.2 14.0 0.8 28.0M762.0 477.3q-1.2 16.8 -6.0 33.7M673.7 466.1q-0.5 14.3 -2.5 28.6M797.4 474.2q-1.1 16.1 -5.4 32.2M674.9 469.4q0.9 21.1 4.3 42.1M590.9 477.3q-0.6 13.8 -3.1 27.7M695.5 480.5q-0.6 27.1 -3.2 54.2M715.0 467.5q0.6 21.6 3.0 43.2M1009.0 490.2q1.1 12.6 5.6 25.3M940.1 472.7q0.5 17.4 2.4 34.7M839.0 468.0q-0.8 16.2 -3.8 32.4M475.7 501.8q-0.9 12.6 -4.5 25.2M294.7 499.7q0.4 26.6 2.2 53.2M488.6 478.0q-0.0 26.5 -0.1 53.0M300.9 522.5q0.3 26.6 1.6 53.2M869.5 462.9q-1.1 15.1 -5.5 30.1M757.8 467.1q1.4 18.5 7.0 37.1M763.4 483.2q-1.4 25.2 -6.8 50.4M644.2 520.7q-1.3 12.7 -6.5 25.4M1055.6 484.0q-0.9 15.9 -4.3 31.8M849.2 476.9q0.3 25.8 1.4 51.7M708.1 469.8q-1.1 27.4 -5.6 54.9M945.3 481.6q-0.5 23.1 -2.5 46.1M969.5 497.4q1.2 17.9 6.2 35.7M319.7 504.2q-0.7 13.1 -3.4 26.3M1078.9 490.0q-1.1 14.8 -5.4 29.6M894.2 461.5q-0.7 17.0 -3.3 34.0M859.7 458.9q1.2 26.8 6.0 53.6M563.0 475.9q0.2 23.2 0.9 46.5M850.3 477.8q0.7 14.9 3.4 29.8M785.7 461.2q-1.2 15.3 -6.0 30.7M922.5 477.0q0.4 20.3 2.0 40.6M851.0 460.4q-0.3 15.8 -1.7 31.6M933.3 517.9q1.3 23.4 6.6 46.8M558.4 477.1q0.1 17.9 0.4 35.9M559.5 468.6q-1.0 25.3 -5.1 50.5M890.8 476.3q-0.6 18.3 -2.8 36.7M746.0 477.3q1.4 11.7 6.9 23.5M618.0 483.2q-0.2 27.4 -0.8 54.8M1029.4 497.0q0.5 14.3 2.4 28.7M655.0 493.4q0.2 26.6 1.1 53.2M553.6 495.5q-0.8 26.9 -4.1 53.8M227.3 513.0q0.6 12.1 3.2 24.2M610.3 485.0q-0.6 18.9 -3.1 37.8M441.1 498.7q-0.4 27.3 -2.0 54.5M909.8 481.0q-1.1 16.0 -5.5 32.1M820.7 464.7q-0.9 16.5 -4.6 33.0M980.8 488.6q0.8 24.4 4.1 48.8M923.5 476.2q0.7 16.8 3.4 33.7M871.6 467.8q-0.2 20.1 -1.0 40.2M589.2 485.7q1.1 21.6 5.4 43.1M400.3 492.3q1.0 10.9 5.2 21.9M952.4 483.0q1.1 12.9 5.3 25.7M850.5 467.0q-1.2 11.9 -5.8 23.8M653.1 489.6q-1.3 14.5 -6.5 28.9M896.2 467.7q0.8 9.0 3.9 18.0M816.0 455.5q-1.1 21.2 -5.7 42.3M802.9 454.0q0.1 27.2 0.3 54.4M978.1 473.1q0.5 15.6 2.4 31.3M501.2 492.2q-0.9 22.0 -4.3 44.1M749.2 481.8q-0.7 12.5 -3.7 25.0M895.8 467.5q-0.9 13.2 -4.3 26.4M910.3 474.9q1.4 12.1 6.9 24.2M503.4 489.4q0.4 20.0 2.1 39.9M722.8 486.4q1.2 17.2 6.2 34.4M287.1 503.2q0.5 22.9 2.4 45.9M610.7 481.0q0.2 9.6 0.8 19.2M763.1 484.5q0.5 15.3 2.4 30.5M248.6 514.7q-0.9 23.0 -4.4 46.1M989.2 509.2q-0.3 27.4 -1.5 54.8M664.0 500.1q0.8 13.8 3.8 27.6M457.0 495.0q-0.8 15.3 -4.1 30.6M729.8 494.4q-0.2 13.7 -1.0 27.5M407.6 489.9q-1.1 11.4 -5.5 22.8M851.3 467.1q1.3 21.7 6.6 43.3M621.0 474.0q-0.3 12.8 -1.3 25.5M885.9 476.0q0.7 25.8 3.4 51.5M585.1 499.0q-0.0 19.1 -0.1 38.3M836.9 493.8q-0.4 14.6 -2.0 29.2M1077.6 488.1q0.4 17.1 1.8 34.3M915.6 467.2q-0.0 10.4 -0.2 20.8M1031.6 499.6q-0.1 20.0 -0.4 40.1M793.8 469.8q0.0 22.6 0.2 45.2M902.4 481.3q-0.0 14.7 -0.0 29.4M524.1 506.2q-0.7 22.7 -3.5 45.4M762.7 470.7q-0.9 13.7 -4.5 27.3M397.5 489.6q-0.9 21.8 -4.5 43.7M196.4 508.3q1.0 14.6 5.2 29.1M429.2 483.6q-0.8 11.4 -3.9 22.8M696.5 480.6q0.2 12.9 1.1 25.9M728.0 467.7q0.6 11.7 2.8 23.3M389.7 482.0q1.3 25.3 6.5 50.6M436.9 488.9q-0.3 9.4 -1.6 18.8M692.1 495.6q1.3 24.1 6.3 48.1M796.3 458.9q-0.1 25.1 -0.3 50.1M1025.3 486.8q0.6 24.0 3.1 48.0M579.6 494.4q1.1 17.5 5.3 35.0M844.7 473.0q0.2 22.3 0.9 44.7M969.9 483.1q-0.5 22.4 -2.4 44.7M414.3 483.5q0.8 10.2 4.0 20.3M803.4 474.8q0.5 23.9 2.5 47.8M813.5 460.6q-0.8 21.0 -3.9 42.1M654.3 499.4q-0.0 16.5 -0.2 32.9M415.8 490.2q-0.8 9.5 -3.9 19.1M817.9 470.7q-1.4 26.2 -7.0 52.3M960.3 473.4q0.5 24.5 2.4 49.0M488.6 465.5q-1.1 11.3 -5.6 22.7M593.2 501.5q-1.0 13.8 -4.9 27.7M767.8 479.0q-0.2 16.9 -0.8 33.8M980.7 478.3q0.3 19.4 1.7 38.7M730.3 474.5q1.4 16.3 6.9 32.6M543.9 480.1q-0.1 24.9 -0.7 49.8M575.3 510.0q-0.3 11.9 -1.5 23.8M910.7 479.8q-0.7 26.1 -3.3 52.3M544.1 472.9q0.6 20.1 3.1 40.2M244.1 501.3q0.4 22.5 2.2 44.9M910.5 501.5q-0.7 18.6 -3.4 37.2M1046.2 512.1q0.2 24.4 0.8 48.8M559.6 486.0q0.1 20.2 0.7 40.5M470.3 484.0q0.1 20.4 0.7 40.8M891.0 487.7q0.5 26.8 2.3 53.7M769.1 455.9q1.4 22.9 7.0 45.9M707.1 475.7q0.2 23.1 1.0 46.1M408.2 522.1q0.5 14.4 2.3 28.9M525.8 457.9q-1.0 15.9 -4.8 31.9M823.3 460.3q1.0 11.3 4.9 22.6M625.8 480.4q-0.2 20.4 -0.8 40.9M1047.4 497.2q-1.4 24.1 -7.0 48.1M816.6 455.3q0.2 20.8 1.2 41.7M748.2 459.5q0.2 22.3 0.8 44.6M516.3 462.5q0.4 12.7 2.0 25.4M335.5 506.7q1.0 20.3 4.9 40.7M788.5 502.4q-1.2 9.8 -6.2 19.7M571.8 494.9q-0.9 25.9 -4.6 51.9M898.9 490.2q-0.7 20.5 -3.7 40.9M527.7 468.6q-1.4 26.5 -7.0 53.0M455.1 496.5q-0.7 15.8 -3.6 31.7M406.1 491.1q-0.1 15.9 -0.3 31.7M726.7 476.9q-0.6 14.3 -2.9 28.5M740.4 480.1q-1.2 26.8 -5.8 53.7M370.8 496.0q0.6 22.2 3.0 44.4M438.0 478.3q-0.9 9.4 -4.6 18.8M723.5 494.2q-0.8 10.9 -4.2 21.7M714.9 477.2q0.1 16.2 0.3 32.3M483.0 490.6q-1.4 24.8 -6.9 49.6M955.0 484.9q-0.6 11.1 -2.9 22.2M505.7 470.6q-0.6 24.2 -3.1 48.4M398.3 483.1q-1.2 14.8 -5.8 29.5M913.1 487.8q0.9 9.0 4.4 18.0M588.0 497.4q0.2 21.6 0.9 43.2M1016.7 491.2q-1.4 24.5 -6.8 49.1M692.0 492.7q0.9 22.0 4.4 44.0M901.3 464.9q0.9 18.1 4.4 36.2M673.2 475.4q-1.3 13.5 -6.6 27.1M673.7 518.4q0.2 12.7 1.2 25.5M812.3 493.5q0.3 18.6 1.6 37.1M705.3 462.3q1.0 22.2 5.2 44.5M952.4 494.2q1.2 22.4 6.2 44.8M808.7 489.0q1.0 15.0 5.2 30.0M736.2 487.1q0.9 12.1 4.5 24.2M293.0 515.5q-1.0 17.3 -4.8 34.7M216.2 513.9q-0.3 21.5 -1.7 43.0M907.0 468.2q-0.3 16.8 -1.5 33.6M955.2 471.3q0.5 10.8 2.5 21.5M305.0 506.1q0.9 9.8 4.7 19.6M869.0 464.7q-0.2 14.4 -0.8 28.7M515.2 465.9q0.1 16.8 0.7 33.5M392.5 489.6q-0.6 20.1 -3.2 40.1M966.8 476.1q-0.4 13.5 -1.8 27.1M969.4 490.0q0.6 15.6 3.1 31.2M965.5 475.6q-0.9 25.6 -4.5 51.2M1068.0 479.8q-0.9 27.2 -4.5 54.5M410.3 497.6q-1.0 25.7 -5.1 51.4M806.0 469.5q-1.1 17.6 -5.4 35.2M347.9 492.0q1.2 23.4 5.9 46.9M491.1 465.9q-0.1 18.9 -0.7 37.7M353.3 494.9q0.6 25.8 2.8 51.7M823.4 494.5q-0.9 17.0 -4.6 33.9M910.7 470.2q0.3 26.8 1.6 53.7M713.4 472.0q0.2 14.1 1.0 28.1M702.1 469.1q1.2 11.6 6.1 23.2M944.5 486.8q0.0 22.7 0.1 45.3M273.7 490.4q0.1 14.1 0.5 28.2M552.5 463.4q1.1 18.2 5.3 36.5M674.2 481.6q-0.2 22.9 -0.8 45.8M948.6 479.7q-0.9 17.7 -4.7 35.4M767.6 457.8q0.3 24.4 1.7 48.7M514.4 485.4q0.0 21.0 0.1 42.0M840.8 479.1q0.2 23.4 1.1 46.9M618.7 486.4q-1.0 10.9 -4.8 21.9M874.9 473.3q-0.2 12.7 -0.8 25.4M660.0 537.6q1.0 16.2 4.9 32.5M238.1 494.7q-0.1 12.5 -0.5 25.0M1066.8 487.2q-0.8 12.0 -3.8 24.0M720.1 470.9q0.6 21.1 3.1 42.2M564.6 489.0q-0.2 16.4 -1.2 32.7M572.9 480.0q-1.1 18.6 -5.3 37.1M860.2 480.0q1.3 23.0 6.5 46.1M542.7 471.2q-1.2 13.0 -6.1 26.0M1071.9 493.8q0.6 23.2 3.0 46.5M791.3 454.0q0.5 20.9 2.7 41.7M943.6 469.8q-1.1 26.9 -5.5 53.8M1020.5 487.6q0.2 16.0 1.2 31.9M791.2 452.3q0.0 19.5 0.1 39.0M976.5 477.9q0.6 15.6 3.0 31.2M397.6 495.5q-1.1 24.1 -5.3 48.2M887.9 474.3q-0.6 20.7 -2.8 41.5M579.2 510.7q-0.2 24.6 -1.0 49.2M255.1 492.0q0.2 9.6 0.9 19.2M886.2 469.3q-1.2 18.9 -5.8 37.9M479.8 477.1q-0.9 18.7 -4.5 37.4M469.7 486.4q0.6 24.2 2.9 48.5M812.6 467.4q1.2 14.8 5.9 29.7M285.1 489.3q-0.9 21.0 -4.6 41.9M482.4 486.1q0.5 15.5 2.4 31.1M678.5 501.0q1.3 13.1 6.7 26.2M956.7 506.6q-0.6 17.2 -2.9 34.5M901.4 482.5q0.6 15.6 3.1 31.2M582.8 488.7q-0.6 16.7 -2.8 33.4M609.4 495.3q1.0 14.9 4.9 29.7M264.1 497.3q-0.3 12.7 -1.3 25.3M625.7 501.6q-0.8 18.1 -3.8 36.1M716.3 478.4q-0.1 22.4 -0.4 44.8M599.1 492.1q0.7 18.7 3.5 37.4M320.1 494.2q0.8 15.6 3.9 31.2M408.6 484.4q-0.6 20.8 -2.9 41.7M909.6 472.8q0.3 16.3 1.6 32.5M1076.4 483.7q-1.2 22.4 -6.0 44.7M936.9 488.5q-0.2 9.1 -1.0 18.3M539.1 485.6q1.0 13.4 5.0 26.8M891.6 477.4q-0.3 22.5 -1.3 44.9M522.0 483.9q-1.3 23.2 -6.3 46.4M493.1 488.8q0.0 14.6 0.1 29.1M1043.4 494.5q-0.9 9.9 -4.6 19.7M972.3 485.6q-1.2 21.8 -5.8 43.7M917.2 465.1q1.2 10.7 6.1 21.4M741.6 471.9q0.5 18.1 2.4 36.1M933.8 470.4q-0.7 23.4 -3.5 46.7M983.5 472.4q-0.3 14.8 -1.6 29.5M657.1 494.7q-0.3 20.2 -1.4 40.4M947.3 502.8q1.2 13.8 5.8 27.6M529.5 457.6q-1.3 22.2 -6.6 44.5M506.7 485.2q0.9 22.2 4.4 44.4M573.7 530.1q-1.3 10.8 -6.3 21.7M926.2 469.6q0.3 12.4 1.3 24.8M863.3 469.3q0.7 14.6 3.3 29.1M446.0 496.1q-0.1 18.1 -0.4 36.2M756.6 470.8q-1.0 13.3 -5.0 26.6M932.2 482.3q0.3 27.2 1.4 54.5M459.3 485.5q1.0 17.5 5.2 35.0M825.8 471.8q0.6 12.0 3.2 23.9M493.8 486.3q1.1 16.6 5.6 33.1M650.0 493.9q-0.3 19.7 -1.5 39.4M520.3 466.2q0.9 23.9 4.5 47.9M603.2 482.8q-1.0 11.5 -5.1 23.0M1024.0 503.3q0.9 17.5 4.3 35.0M584.8 502.5q-0.3 21.0 -1.5 42.1M275.8 535.2q-1.1 12.6 -5.6 25.1M807.6 462.8q1.0 15.9 4.9 31.8M1043.8 498.9q1.1 12.8 5.4 25.6M299.8 499.7q1.3 26.4 6.4 52.9M450.0 507.8q-1.3 10.9 -6.5 21.9M740.7 459.2q-0.7 20.6 -3.7 41.1M915.9 501.9q-0.0 21.4 -0.2 42.9M870.9 486.6q-0.5 9.3 -2.7 18.5M641.6 491.2q0.4 12.8 2.1 25.6M634.4 487.6q-0.3 12.5 -1.6 25.0M327.7 492.1q0.9 20.7 4.6 41.3M505.2 465.1q0.5 12.4 2.7 24.7M1006.3 479.5q-1.3 14.2 -6.3 28.4M532.9 465.3q1.2 11.7 6.2 23.3M846.6 455.4q0.9 10.0 4.7 19.9M766.7 456.8q-0.1 24.1 -0.5 48.3M236.0 513.2q0.6 17.8 2.8 35.7M477.4 482.2q-0.5 15.8 -2.6 31.7M957.1 497.0q-0.4 27.1 -2.0 54.2M423.9 486.1q0.1 25.3 0.5 50.7M779.8 489.5q-0.6 14.5 -3.1 28.9M465.6 502.4q-0.2 9.6 -1.1 19.2M545.6 473.8q0.5 15.3 2.5 30.5M941.2 469.7q1.1 26.3 5.6 52.6M773.4 471.9q-1.1 17.8 -5.7 35.5M787.4 497.6q-0.6 21.6 -3.1 43.2M534.7 494.5q-0.1 9.8 -0.5 19.5M815.0 474.8q-0.7 13.1 -3.7 26.3M975.3 482.8q-0.4 15.7 -2.2 31.3M912.4 504.8q-0.6 16.9 -3.1 33.8M195.7 504.6q-1.1 22.8 -5.5 45.6M397.0 499.5q0.2 23.1 1.0 46.2M480.5 474.7q-0.3 25.8 -1.7 51.6M902.6 473.7q1.0 26.8 5.0 53.7M403.4 509.5q-0.2 20.9 -0.8 41.8M690.2 487.7q-1.4 13.5 -6.8 27.1M250.3 511.0q-1.2 11.2 -5.8 22.5M693.4 466.8q0.1 17.8 0.3 35.7M927.4 489.0q-1.1 22.7 -5.3 45.3M1010.5 513.3q0.7 17.9 3.7 35.7M490.8 466.4q0.7 22.4 3.7 44.8M456.6 478.9q-1.1 14.1 -5.7 28.3M605.2 481.8q1.3 17.3 6.5 34.6M957.3 475.4q0.7 10.5 3.4 20.9M1072.9 490.4q0.9 22.8 4.7 45.5M1079.0 479.9q0.4 18.5 1.8 36.9M925.4 476.7q0.8 10.1 4.0 20.2M608.5 476.8q1.2 20.5 5.8 40.9M874.2 469.7q-0.3 20.8 -1.4 41.5M993.5 484.3q-0.8 18.8 -3.8 37.6M422.5 506.7q0.8 12.9 4.0 25.8M922.3 517.3q0.9 16.4 4.5 32.9M684.0 477.3q-0.2 14.1 -0.9 28.1M712.9 469.6q1.3 25.7 6.7 51.4M612.3 492.7q-1.2 10.7 -6.0 21.3M340.7 521.7q0.2 16.7 0.9 33.4M873.3 466.2q1.3 26.6 6.3 53.2M312.6 486.4q-1.0 10.4 -4.8 20.8M622.1 499.2q0.9 12.2 4.4 24.3M1037.8 498.8q0.8 25.7 4.0 51.5M418.1 486.4q-0.9 27.3 -4.3 54.6M387.6 498.8q0.0 16.9 0.1 33.8M890.0 479.2q-0.9 13.0 -4.4 26.0M802.6 453.3q-0.2 19.9 -1.2 39.8M976.8 493.2q-0.1 21.0 -0.3 42.0M818.9 454.5q-0.8 18.0 -4.1 36.0M384.3 489.2q-0.4 11.9 -2.0 23.9M945.6 472.4q0.5 16.2 2.6 32.5M747.3 485.1q-0.4 20.1 -1.9 40.3M806.5 460.4q0.7 12.7 3.5 25.3M608.8 499.0q1.2 11.8 6.1 23.6M1079.3 478.5q-0.1 22.1 -0.6 44.2M879.3 497.5q0.6 26.8 2.8 53.5M894.6 469.3q0.1 16.9 0.6 33.8M988.5 476.3q0.8 23.2 4.0 46.4M1030.4 484.8q-0.7 10.2 -3.3 20.5M311.0 493.6q-0.8 19.0 -4.0 38.0M939.7 484.0q-0.4 20.8 -2.1 41.6M621.7 473.8q-1.1 20.3 -5.3 40.5M485.4 516.2q-0.5 19.1 -2.6 38.3M1009.3 477.0q0.6 15.6 2.8 31.2M894.5 497.6q0.0 13.7 0.2 27.3M829.8 458.5q0.6 10.3 2.8 20.6M419.2 483.1q-0.8 13.4 -4.2 26.8M720.4 463.2q-0.2 16.2 -1.2 32.4M367.7 492.7q0.3 10.4 1.5 20.9M573.4 490.8q-0.3 21.7 -1.6 43.3M647.0 505.1q-0.5 19.5 -2.3 39.0M994.5 483.1q-1.1 27.5 -5.6 55.0M997.2 479.1q-0.1 25.5 -0.4 51.0M449.8 494.2q0.2 17.7 0.9 35.3M695.6 473.9q-1.0 9.3 -5.1 18.6M907.2 470.6q-0.1 10.5 -0.3 21.1M523.7 465.5q-0.6 13.6 -2.8 27.2M414.3 500.8q0.8 20.4 3.9 40.8M700.5 475.5q0.6 23.5 3.1 46.9M991.8 500.3q0.4 12.0 1.9 24.0M808.2 459.9q1.3 11.3 6.4 22.7M543.7 481.2q-0.2 10.3 -0.8 20.7M433.8 501.3q-0.3 17.2 -1.3 34.4M363.8 483.6q1.2 15.8 6.0 31.7M713.6 461.9q-0.9 25.2 -4.7 50.4M602.5 494.1q0.2 12.0 1.1 24.1M884.3 465.6q0.8 25.9 4.2 51.7M521.9 459.5q-0.5 17.4 -2.4 34.8M313.5 501.1q0.1 21.9 0.3 43.9M930.1 491.1q-0.9 25.7 -4.6 51.4M459.0 489.7q0.8 11.8 4.2 23.7M752.8 470.2q1.0 21.7 4.8 43.4M357.4 494.4q0.4 22.9 2.1 45.8M803.2 463.8q-1.0 12.4 -5.0 24.8M1074.4 480.5q-0.7 22.7 -3.5 45.4M1031.5 478.7q0.5 9.6 2.6 19.2M533.4 472.8q0.0 10.0 0.2 19.9M415.4 482.3q-0.8 17.1 -3.9 34.2M745.3 515.9q0.0 25.1 0.0 50.1M884.6 480.1q1.4 15.5 7.0 31.1M917.8 504.8q-0.7 24.1 -3.4 48.1M981.6 507.8q-0.1 22.9 -0.4 45.9M900.5 462.6q0.3 26.8 1.6 53.7M239.4 513.2q-0.6 24.5 -3.0 48.9M539.0 489.7q0.9 25.4 4.4 50.7M379.8 489.7q1.1 21.4 5.7 42.8M793.0 459.5q0.5 17.5 2.5 34.9M547.3 484.2q0.2 12.9 1.0 25.7M948.3 473.0q1.3 16.7 6.4 33.3M853.8 464.6q0.8 25.6 3.9 51.1M747.1 480.5q0.9 19.7 4.5 39.4M410.7 482.3q-1.1 26.8 -5.7 53.6M414.2 504.3q1.3 26.9 6.4 53.8M364.0 486.3q-0.7 9.0 -3.5 18.1M845.4 463.8q-0.1 27.0 -0.6 54.0M586.6 474.8q-1.4 13.2 -6.8 26.5M758.5 470.0q-1.3 15.1 -6.7 30.2M527.0 479.6q-0.1 16.3 -0.6 32.6M467.3 486.2q0.0 19.6 0.0 39.3M341.6 491.8q-1.2 13.0 -5.9 26.0M814.4 460.7q-0.7 23.8 -3.6 47.5M743.9 457.8q-0.9 13.4 -4.6 26.8M335.6 512.3q0.9 22.5 4.7 45.1M315.5 506.9q-1.1 24.4 -5.6 48.8M702.6 485.2q-1.3 9.1 -6.6 18.2M513.1 488.1q1.4 13.7 7.0 27.4M741.0 474.4q1.4 23.4 6.9 46.8M460.5 499.8q0.1 14.2 0.6 28.5M1081.9 478.6q0.8 22.0 4.1 44.0M648.2 478.9q-0.6 24.7 -3.2 49.4M513.8 481.1q-0.1 24.7 -0.4 49.4M436.2 481.4q-0.8 22.3 -3.9 44.6" fill="none" stroke="#2a0a01" stroke-width="2.2" stroke-linecap="round" opacity="0.30" filter="url(#b1)"/>
</g></g>
<g clip-path="url(#cc)"><use href="#ph"/></g>
<rect x="328.5" y="144.5" width="621.0" height="410.0" fill="none" stroke="#000" stroke-opacity="0.55" stroke-width="1"/>
<rect x="330.0" y="146.0" width="618.0" height="407.0" fill="none" stroke="#fff" stroke-width="2"/>
<path d="M536.8 147.0V552.0" stroke="#4a1000" stroke-opacity="0.16" stroke-width="1"/>
<path d="M535.8 147.0V552.0" stroke="#fff" stroke-opacity="0.72" stroke-width="1.2"/>
<path d="M743.4 147.0V552.0" stroke="#4a1000" stroke-opacity="0.16" stroke-width="1"/>
<path d="M742.4 147.0V552.0" stroke="#fff" stroke-opacity="0.72" stroke-width="1.2"/>
<path d="M331.0 282.0H947.0" stroke="#4a1000" stroke-opacity="0.16" stroke-width="1"/>
<path d="M331.0 281.0H947.0" stroke="#fff" stroke-opacity="0.72" stroke-width="1.2"/>
<path d="M331.0 418.4H947.0" stroke="#4a1000" stroke-opacity="0.16" stroke-width="1"/>
<path d="M331.0 417.4H947.0" stroke="#fff" stroke-opacity="0.72" stroke-width="1.2"/>
</svg></div>
<div class="a" style="left:184.2px;top:645.6px;width:905.8px;height:33px;background:linear-gradient(#ececec,#e1e1e1 60%,#d9d9d9);border-left:1px solid #b9b9b9;box-shadow:inset 1px 0 0 #f0f0f0;box-sizing:border-box"></div>
<div class="a" style="left:0;top:678.6px;width:1092px;height:1.2px;background:#bdbdbd"></div>
<div class="a" style="left:0;top:679.8px;width:1092px;height:2.2px;background:#dadada"></div>
<div class="a" style="left:1090px;top:55px;width:2px;height:627px;background:#d6d6d6"></div>
<svg class="i" style="left:186px;top:646px" width="904" height="33" viewBox="186 646 904 33">
<defs>
<linearGradient id="tb1" x1="0" y1="0" x2="1" y2="0"><stop offset="0" stop-color="#e84040"/><stop offset="0.25" stop-color="#f0c030"/><stop offset="0.5" stop-color="#50c040"/><stop offset="0.75" stop-color="#4080e0"/><stop offset="1" stop-color="#b040c0"/></linearGradient>
<linearGradient id="tb2" x1="0" y1="0" x2="1" y2="0"><stop offset="0" stop-color="#101010"/><stop offset="1" stop-color="#ffffff"/></linearGradient>
<radialGradient id="tb3" cx="0.5" cy="0.5" r="0.6"><stop offset="0" stop-color="#f4b840"/><stop offset="1" stop-color="#b87418"/></radialGradient>
</defs>
<!-- rotate -->
<path d="M205.4 658.9a5 5 0 1 0 1.5 5.500000000000001" fill="none" stroke="#3a3a3a" stroke-width="2"/>
<path d="M201.4 654.8l5.4 1.6-3.2 4.2z" fill="#3a3a3a"/>
<circle cx="202" cy="663.3" r="1.15" fill="#3a3a3a"/>
<!-- red-eye -->
<path d="M336.8 662.4q8.6-8.6 17.2 0q-8.6 8.6-17.2 0z" fill="url(#tb3)" stroke="#7a5a28" stroke-width="0.8"/>
<circle cx="345.4" cy="662.4" r="3.4" fill="#5a4420"/>
<circle cx="345.4" cy="662.4" r="1.6" fill="#e8a020"/>
<!-- adjust -->
<rect x="442.2" y="655.2" width="15" height="4" fill="url(#tb1)" stroke="#a0a0a0" stroke-width="0.5"/>
<rect x="442.2" y="660.4" width="15" height="4" fill="#58b8b8" stroke="#909090" stroke-width="0.5"/>
<rect x="442.2" y="665.6" width="15" height="4" fill="url(#tb2)" stroke="#909090" stroke-width="0.5"/>
<!-- enhance (magic wand), half hidden by the dialog -->
<path d="M517.2 659.4l6.4 6" stroke="#9a9a9a" stroke-width="1.6" fill="none"/>
<path d="M513.4 669.4h11.6q2.600000000000001-0.2 2.4-2.2l-3.4-3.4" fill="none" stroke="#303030" stroke-width="1.5" stroke-linecap="round"/>
<!-- zoom slider -->
<rect x="918.4" y="657.4" width="10.2" height="10" fill="#f4f4f4" stroke="#6a6a6a" stroke-width="0.8"/>
<circle cx="923.5" cy="662.4" r="1.3" fill="#3a3a3a"/><path d="M921 666.6q0.3-2.600000000000001 2.5-2.6t2.5 2.6z" fill="#3a3a3a"/>
<rect x="934" y="660.8" width="84.6" height="3.2" rx="1.6" fill="#b4b4b4" stroke="#a2a2a2" stroke-width="0.5"/>
<rect x="933.6" y="656.9" width="8" height="11.2" rx="1.6" fill="#f4f4f4" stroke="#bcbcbc" stroke-width="0.7"/>
<path d="M936.2 661.6h2.8M936.2 663.4h2.8" stroke="#c4c4c4" stroke-width="0.6"/>
<rect x="1021.4" y="657.2" width="10.4" height="10.4" fill="#f4f4f4" stroke="#5a5a5a" stroke-width="0.8"/>
<circle cx="1026.6" cy="661" r="2.1" fill="#3a3a3a"/><path d="M1022.4 667q0.4-3.8 4.2-3.8t4.2 3.8z" fill="#3a3a3a"/>
<!-- arrows -->
<path d="M1041.6 661.6l5.6-4.8v2.8h5.4v4h-5.4v2.8z" fill="#3a3a3a"/>
<path d="M1079 661.6l-5.600000000000001-4.8v2.8h-5.4v4h5.4v2.8z" fill="#3a3a3a"/>
</svg>

<div class="t" style="top:655.88px;font-size:9px;line-height:12px;color:#2e3436;left:214.00px;letter-spacing:0.136px;">Drehen</div>
<div class="a" style="left:249.2px;top:649.2px;width:81.8px;height:25.4px;box-sizing:border-box;border:1.2px solid #888;border-radius:4px;background:linear-gradient(#b2b2b2,#c6c6c6 30%,#c2c2c2 60%,#b6b6b6);box-shadow:inset 0 1px 1.5px rgba(0,0,0,.22)"></div>
<svg class="i" style="left:252px;top:652px" width="24" height="22" viewBox="252 652 24 22">
<defs><filter id="cb" x="-20%" y="-20%" width="140%" height="140%"><feGaussianBlur stdDeviation="0.45"/></filter></defs>
<path d="M254.4 656.6q2.2-1 4.600000000000001 0q0.2 7.4 1.4 9.4q1 1.6 2.4 1.8v3.2h-8.4z" fill="#f4ae68" filter="url(#cb)"/>
<path d="M262 655.8l3.9 9.200000000000001" stroke="#7c7c7c" stroke-width="1.3" fill="none" stroke-linecap="round"/>
<path d="M266.2 655.4l-0.7 9.6" stroke="#a2a2a2" stroke-width="1.2" fill="none" stroke-linecap="round"/>
<ellipse cx="264.7" cy="669" rx="1.5" ry="2.2" fill="#f8e0c0" stroke="#1c0e06" stroke-width="1.3" transform="rotate(14 264.7 669)"/>
<path d="M265.6 664.8l1.4 0.9" stroke="#1c0e06" stroke-width="1.3"/>
<circle cx="270" cy="667" r="1.5" fill="#8a8a8a" stroke="#2a2a2a" stroke-width="1.2"/>
<path d="M266.4 664.6l2.4 1.4" stroke="#2a2a2a" stroke-width="1.2"/>
</svg>

<div class="t" style="top:655.88px;font-size:9px;line-height:12px;color:#7c7c7c;left:275.20px;letter-spacing:0.078px;text-shadow:0.6px 0.8px 0 rgba(255,255,255,.45);">Beschneiden</div>
<div class="t" style="top:655.88px;font-size:9px;line-height:12px;color:#2e3436;left:357.60px;letter-spacing:0.025px;">Rote-Augen Effekt</div>
<div class="t" style="top:655.88px;font-size:9px;line-height:12px;color:#b9b9b9;left:462.50px;letter-spacing:0.136px;">Anpassen</div>
<div class="t" style="top:655.88px;font-size:9px;line-height:12px;color:#b9b9b9;left:532.50px;letter-spacing:-0.060px;">Verbessern</div>
<div class="a" style="left:461.4px;top:627.7px;width:352.6px;height:37.2px;background:linear-gradient(rgba(204,204,204,.97),rgba(200,200,200,.97) 47%,rgba(206,206,206,.90) 49%,rgba(214,214,214,.86));box-shadow:1px 2px 4px rgba(0,0,0,.38)"></div>
<div class="a" style="left:469.7px;top:637px;width:176.7px;height:19.4px;box-sizing:border-box;border:1px solid #a9b19f;border-radius:3px;background:linear-gradient(#dfe5d9,#d3dacc 48%,#e3e8de 52%,#eaeee6);box-shadow:0 1px 0 rgba(255,255,255,.6)"></div>
<div class="t" style="top:640.43px;font-size:10px;line-height:12px;color:#2e3436;left:474.20px;letter-spacing:0.209px;">Unbeschränkt</div>
<svg class="i" style="left:634px;top:642px" width="9" height="9" viewBox="634 642 9 9"><path d="M635.3 643.9h6.2l-3.1 5.4z" fill="#4c4c4c"/></svg>
<div class="a" style="left:654.7px;top:636.6px;width:20.6px;height:19.8px;box-sizing:border-box;border:1px solid #c0c0c0;border-radius:3px;background:linear-gradient(#d6d6d6,#d0d0d0 48%,#dadada 52%,#dedede)"></div>
<svg class="i" style="left:658px;top:640px" width="14" height="13" viewBox="658 640 14 13" fill="none" stroke="#adadad" stroke-width="1"><rect x="660" y="642" width="10" height="8.6" stroke-dasharray="1.4 1"/><path d="M667.6 646.4a2.5 2.5 0 1 1 -1.2 -2.1"/></svg>
<div class="a" style="left:683.6px;top:636.2px;width:56.8px;height:20.2px;box-sizing:border-box;border:1px solid #a6a6a6;border-radius:3.5px;background:linear-gradient(#ebebeb,#e3e3e3 45%,#f3f3f3 50%,#e9e9e9);box-shadow:0 1px 0 rgba(255,255,255,.45)"></div>
<div class="a" style="left:748.4px;top:636.2px;width:57.2px;height:20.2px;box-sizing:border-box;border:1px solid #a6a6a6;border-radius:3.5px;background:linear-gradient(#ebebeb,#e3e3e3 45%,#f3f3f3 50%,#e9e9e9);box-shadow:0 1px 0 rgba(255,255,255,.45)"></div>
<div class="t" style="top:639.93px;font-size:10px;line-height:12px;color:#2e3436;left:687.40px;letter-spacing:0.056px;"><u>A</u>bbrechen</div>
<div class="t" style="top:639.93px;font-size:10px;line-height:12px;color:#2e3436;left:770.60px;letter-spacing:-0.3px;"><u>O</u>K</div>
<svg class="i" style="left:327px;top:553px" width="12" height="16" viewBox="0 0 12 16"><path d="M2.2 1.6v10l2.3-2.1 1.8 3.9 1.5-0.7-1.8-3.8 3.1-0.2z" fill="#f2f2f2" stroke="#111" stroke-width="0.7"/></svg>
</body></html>
